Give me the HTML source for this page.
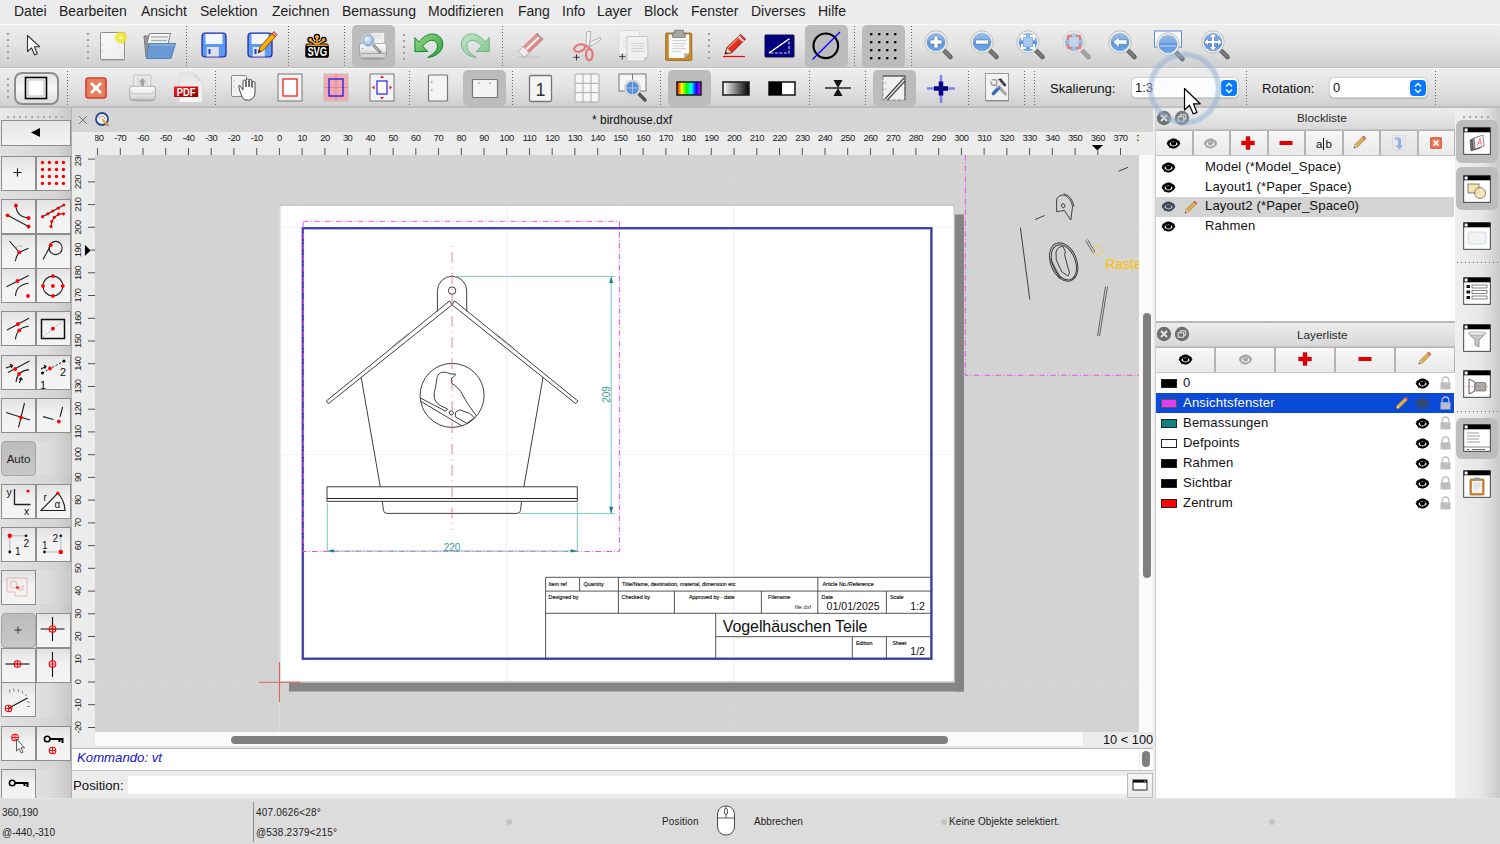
<!DOCTYPE html>
<html><head><meta charset="utf-8">
<style>
*{margin:0;padding:0;box-sizing:border-box}
html,body{width:1500px;height:844px;overflow:hidden;background:#ececec;font-family:"Liberation Sans",sans-serif;color:#222}
.a{position:absolute}
svg{overflow:visible}
#menu span{position:absolute;top:3px;font-size:14px;color:#1e1e1e;line-height:16px}
.grip{position:absolute;width:2px;background:repeating-linear-gradient(#9a9a9a 0 2px,transparent 2px 6px)}
.sep{position:absolute;width:1px;background:repeating-linear-gradient(#6a6a6a 0 1px,transparent 1px 3px)}
.pr{position:absolute;background:#bcbcbc;border-radius:5px}
.ic{position:absolute}
.lb{position:absolute;width:34px;height:35px;border:1px solid #9c9c9c;background:linear-gradient(#f4f4f4,#e2e2e2)}
.st{position:absolute;font-size:11px;color:#222;line-height:13px;white-space:nowrap}

</style></head><body>
<div class="a" style="left:0;top:0;width:1500px;height:24px;background:#ececec"></div>
<div class="a" style="left:0;top:24px;width:1500px;height:44px;background:linear-gradient(#ededed,#e4e4e4 45%,#cfcfcf);border-top:1px solid #f8f8f8;border-bottom:1px solid #c0c0c0"></div>
<div class="a" style="left:0;top:68px;width:1500px;height:40px;background:linear-gradient(#ededed,#e4e4e4 45%,#d0d0d0);border-top:1px solid #f6f6f6;border-bottom:2px solid #bdbdbd"></div>
<div class="a" style="left:0;top:108px;width:71px;height:690px;background:linear-gradient(90deg,#e8e8e8,#dcdcdc 70%,#c8c8c8)"></div>
<div class="a" style="left:71px;top:108px;width:1083px;height:690px;background:#ececec;border-left:1px solid #b0b0b0"></div>
<div class="a" style="left:72px;top:108px;width:1081px;height:24px;background:#d5d5d5"></div>
<div class="a" style="left:95px;top:155px;width:1044px;height:577px;background:#d3d3d3"></div>
<div class="a" style="left:1139px;top:155px;width:14px;height:591px;background:#fafafa"></div>
<div class="a" style="left:95px;top:732px;width:988px;height:14px;background:#fafafa"></div>
<div class="a" style="left:72px;top:746px;width:1081px;height:3px;background:#e6e6e6;border-bottom:1px solid #bdbdbd"></div>
<div class="a" style="left:72px;top:749px;width:1081px;height:22px;background:#fff;border-bottom:1px solid #c4c4c4"></div>
<div class="a" style="left:72px;top:771px;width:1081px;height:27px;background:#ececec"></div>
<div class="a" style="left:1153px;top:108px;width:302px;height:690px;background:#ececec"></div>
<div class="a" style="left:1455px;top:108px;width:45px;height:690px;background:linear-gradient(90deg,#efefef,#e6e6e6 60%,#c9c9c9)"></div>
<div class="a" style="left:0;top:798px;width:1500px;height:46px;background:#dcdcdc"></div>

<div id="menu">
<span style="left:14px">Datei</span>
<span style="left:59px">Bearbeiten</span>
<span style="left:141px">Ansicht</span>
<span style="left:200px">Selektion</span>
<span style="left:272px">Zeichnen</span>
<span style="left:342px">Bemassung</span>
<span style="left:428px">Modifizieren</span>
<span style="left:518px">Fang</span>
<span style="left:562px">Info</span>
<span style="left:597px">Layer</span>
<span style="left:644px">Block</span>
<span style="left:691px">Fenster</span>
<span style="left:751px">Diverses</span>
<span style="left:818px">Hilfe</span>
</div>

<div class="a" style="left:7px;top:33px;width:2px;height:2px;background:#a0a0a0"></div><div class="a" style="left:7px;top:39px;width:2px;height:2px;background:#a0a0a0"></div><div class="a" style="left:7px;top:45px;width:2px;height:2px;background:#a0a0a0"></div><div class="a" style="left:7px;top:51px;width:2px;height:2px;background:#a0a0a0"></div><div class="a" style="left:7px;top:57px;width:2px;height:2px;background:#a0a0a0"></div>
<svg class="a" style="left:26px;top:34px" width="15" height="23" viewBox="0 0 15 23"><path d="M1.5 1.5V17.5L5.5 13.8L8.6 21L11.4 19.8L8.4 12.8L13.6 12.6Z" fill="#fff" stroke="#333" stroke-width="1.1" stroke-linejoin="round"/></svg>
<div class="a" style="left:87px;top:33px;width:2px;height:2px;background:#a0a0a0"></div><div class="a" style="left:87px;top:39px;width:2px;height:2px;background:#a0a0a0"></div><div class="a" style="left:87px;top:45px;width:2px;height:2px;background:#a0a0a0"></div><div class="a" style="left:87px;top:51px;width:2px;height:2px;background:#a0a0a0"></div><div class="a" style="left:87px;top:57px;width:2px;height:2px;background:#a0a0a0"></div>
<svg class="a" style="left:99px;top:31px" width="28" height="31" viewBox="0 0 28 31"><defs><linearGradient id="nd" x1="0" y1="0" x2="1" y2="1"><stop offset="0" stop-color="#fafafa"/><stop offset="1" stop-color="#ececec"/></linearGradient><radialGradient id="gl"><stop offset="0" stop-color="#fff"/><stop offset="0.35" stop-color="#f4ec30"/><stop offset="0.7" stop-color="#eee030" stop-opacity="0.8"/><stop offset="1" stop-color="#eee030" stop-opacity="0"/></radialGradient></defs><rect x="1.5" y="1.5" width="24" height="27" rx="1" fill="url(#nd)" stroke="#8c8c8c" stroke-width="1"/><rect x="2" y="28.5" width="24" height="1.5" fill="#a0a0a0" opacity="0.6"/><circle cx="21.9" cy="6.5" r="7" fill="url(#gl)"/><path d="M3 13.5h1M3 20.5h1" stroke="#aaa"/></svg>
<svg class="a" style="left:141px;top:31px" width="36" height="29" viewBox="0 0 36 29"><path d="M3 5H10L9 26H5Z" fill="#9a9a9a" stroke="#666" stroke-width="0.8"/><path d="M8.5 2.5H29.5L27 13H6Z" fill="#f6f6f6" stroke="#777" stroke-width="0.9"/><path d="M10 6H27M10 9.5H26" stroke="#b0b0b0" stroke-width="1.6"/><path d="M8 12.5H34.5L30 27.5H5.5Z" fill="#6a9ad4" stroke="#4a7ab8" stroke-width="0.9"/><path d="M9 14H33" stroke="#9cc0ea" stroke-width="1"/></svg>
<div class="sep" style="left:186px;top:26px;height:41px"></div>
<svg class="a" style="left:201px;top:32px" width="27" height="27" viewBox="0 0 27 27"><rect x="1" y="1" width="24" height="24" rx="3" fill="#5a9af0" stroke="#2020a0" stroke-width="1.2"/><rect x="4.5" y="2" width="17" height="10" fill="#f4f6ff"/><rect x="5.8" y="15" width="12" height="9.5" fill="#e2e2ea"/><rect x="7.5" y="17" width="2" height="5" fill="#1040d0"/></svg>
<svg class="a" style="left:247px;top:30px" width="31" height="29" viewBox="0 0 31 29"><g transform="translate(0,2)"><rect x="1" y="1" width="24" height="24" rx="3" fill="#5a9af0" stroke="#2020a0" stroke-width="1.2"/><rect x="4.5" y="2" width="17" height="10" fill="#f4f6ff"/><rect x="5.8" y="15" width="12" height="9.5" fill="#e2e2ea"/><rect x="7.5" y="17" width="2" height="5" fill="#1040d0"/></g><path d="M11 23L13 17L25 3.5L28.5 6.5L16.5 20Z" fill="#f6b400" stroke="#a03010" stroke-width="0.9"/><path d="M25 3.5L26.8 1.6L30.2 4.6L28.5 6.5Z" fill="#f0a0a0" stroke="#a03010" stroke-width="0.8"/><path d="M11 23L12 19.5L14.5 21.5Z" fill="#333"/></svg>
<div class="sep" style="left:288px;top:26px;height:41px"></div>
<svg class="a" style="left:300px;top:24px" width="100" height="44" viewBox="300 24 100 44"><defs><linearGradient id="pb" x1="0" y1="0" x2="0" y2="1"><stop offset="0" stop-color="#fbfbfb"/><stop offset="0.6" stop-color="#e8e8e8"/><stop offset="1" stop-color="#c4c4c4"/></linearGradient><radialGradient id="pg" cx="0.4" cy="0.35"><stop offset="0" stop-color="#eef4fc"/><stop offset="1" stop-color="#a8c4e8"/></radialGradient></defs><g stroke="#000" stroke-width="3" stroke-linecap="round"><path d="M317 45L317 37M317 45L310.5 40M317 45L323.5 40M317 45L307 45M317 45L327 45"/></g><g fill="#f7a830" stroke="#000" stroke-width="1.3"><circle cx="317" cy="37" r="2.6"/><circle cx="310.3" cy="39.8" r="2.4"/><circle cx="323.7" cy="39.8" r="2.4"/></g><g stroke="#f7a830" stroke-width="1.6" stroke-linecap="round"><path d="M317 45L317 37.5M317 45L310.8 40.3M317 45L323.2 40.3"/></g><rect x="305.3" y="44.4" width="23.6" height="13.4" rx="2.6" fill="#000"/><path d="M306.5 45.2H327.8" stroke="#f7a830" stroke-width="1.4"/><text transform="translate(317.2,56.3) scale(0.78,1)" font-size="12.2" font-weight="bold" fill="#fff" text-anchor="middle" font-family="Liberation Sans" letter-spacing="-0.3">SVG</text></svg>
<div class="sep" style="left:344px;top:26px;height:41px"></div>
<div class="pr" style="left:352px;top:25px;width:43px;height:43px"></div>
<svg class="a" style="left:350px;top:24px" width="50" height="44" viewBox="350 24 50 44"><rect x="371" y="32.6" width="13.5" height="12" fill="#f2f2f2" stroke="#bdbdbd" stroke-width="0.8"/><path d="M373 35.5H382M373 38H382" stroke="#d0d0d0" stroke-width="0.7"/><path d="M359.5 45.5Q359.5 43.5 361.5 43.5H384.5Q386.5 43.5 386.5 45.5V54.5H359.5Z" fill="url(#pb)" stroke="#9a9a9a" stroke-width="0.8"/><rect x="360" y="53.5" width="26" height="4.5" rx="1.5" fill="#d6d6d6" stroke="#9a9a9a" stroke-width="0.7"/><ellipse cx="373" cy="58.6" rx="12" ry="1.2" fill="#888" opacity="0.5"/><path d="M362 48.5h1.2" stroke="#777" stroke-width="0.9"/><path d="M372.8 44.5L380 52" stroke="#8c8c8c" stroke-width="3" stroke-linecap="round"/><path d="M373.6 45.6L379.3 51.3" stroke="#d8d8d8" stroke-width="0.8"/><circle cx="368.2" cy="40.4" r="6.4" fill="#f4f4f4" stroke="#c8c8c8" stroke-width="0.6"/><circle cx="368.2" cy="40.4" r="5.2" fill="url(#pg)" stroke="#5a8ad0" stroke-width="0.9"/></svg>
<div class="a" style="left:403px;top:34px;width:2px;height:2px;background:#a0a0a0"></div><div class="a" style="left:403px;top:40px;width:2px;height:2px;background:#a0a0a0"></div><div class="a" style="left:403px;top:46px;width:2px;height:2px;background:#a0a0a0"></div><div class="a" style="left:403px;top:52px;width:2px;height:2px;background:#a0a0a0"></div><div class="a" style="left:403px;top:58px;width:2px;height:2px;background:#a0a0a0"></div>
<svg class="a" style="left:408px;top:28px" width="90" height="36" viewBox="408 28 90 36"><defs><linearGradient id="ug" x1="0" y1="0" x2="1" y2="1"><stop offset="0" stop-color="#98d880"/><stop offset="1" stop-color="#2aa040"/></linearGradient><linearGradient id="rg" x1="1" y1="0" x2="0" y2="1"><stop offset="0" stop-color="#c4e8c0"/><stop offset="1" stop-color="#80c490"/></linearGradient></defs><path d="M414.9 37.6L418.8 42.1C422 38 427 34 432 34C438 34 442.8 38 442.8 44.2C442.8 51 436 57 427.8 57.4C433 54 437.4 51 437.4 46C437.4 42.5 435 40.3 432 40.3C429 40.3 425 43 422.7 46.3L427.8 51.4L414.9 51.7Z" fill="url(#ug)" stroke="#0a7a2a" stroke-width="0.9" stroke-linejoin="round"/><g transform="translate(904.2,0) scale(-1,1)"><path d="M414.9 37.6L418.8 42.1C422 38 427 34 432 34C438 34 442.8 38 442.8 44.2C442.8 51 436 57 427.8 57.4C433 54 437.4 51 437.4 46C437.4 42.5 435 40.3 432 40.3C429 40.3 425 43 422.7 46.3L427.8 51.4L414.9 51.7Z" fill="url(#rg)" stroke="#68b07c" stroke-width="0.9" stroke-linejoin="round"/></g></svg>
<div class="sep" style="left:502px;top:26px;height:41px"></div>
<svg class="a" style="left:508px;top:26px" width="200" height="40" viewBox="508 26 200 40"><defs><linearGradient id="eg" x1="0" y1="0" x2="1" y2="1"><stop offset="0" stop-color="#f0b0b0"/><stop offset="1" stop-color="#d86868"/></linearGradient></defs><ellipse cx="529" cy="56.8" rx="12" ry="1.6" fill="#c8c8c8" opacity="0.8"/><path d="M518.3 51.3L537.3 33L543.3 39L524.3 57.3Z" fill="url(#eg)" stroke="#c07070" stroke-width="0.6"/><path d="M521.3 54.3L540.3 36" stroke="#f2f2f2" stroke-width="2.2"/><path d="M536.6 33.7L542.6 39.7" stroke="#999" stroke-width="1.6"/><path d="M518.3 51.3L523 46.7L529 52.7L524.3 57.3Z" fill="#eeeeee" stroke="#aaa" stroke-width="0.6"/><path d="M586.7 32L590.7 31.3L589.4 46.7L586 44.7Z" fill="#f4f4f4" stroke="#9a9a9a" stroke-width="0.7"/><path d="M590 42L600.7 37.3L600.7 40L589.7 46.7Z" fill="#f4f4f4" stroke="#9a9a9a" stroke-width="0.7"/><ellipse cx="579.6" cy="48" rx="5.6" ry="3.4" transform="rotate(-18 579.6 48)" fill="none" stroke="#e07a7a" stroke-width="2.3"/><ellipse cx="589.3" cy="54.6" rx="3.3" ry="5.6" fill="none" stroke="#e07a7a" stroke-width="2.3"/><path d="M584 47.5L588 45.5M588.5 46.5L589 49" stroke="#e07a7a" stroke-width="2"/><path d="M573.5 57.3H579.5M576.5 54.3V60.3" stroke="#333" stroke-width="1"/><path d="M619 30.5H638Q639.4 30.5 639.4 32V54.2H619Z" fill="#f2f2f2" stroke="#d4d4d4" stroke-width="0.8"/><path d="M622 38H626M622 41H626M622 43.8H626M622 46.6H626" stroke="#dadada" stroke-width="0.8"/><path d="M627 36.5H646.4Q647.8 36.5 647.8 38V57.5L644.3 61.1H627Z" fill="#f0f0f0" stroke="#bdbdbd" stroke-width="0.8"/><path d="M644.3 61.1V57.5H647.8Z" fill="#d0d0d0" stroke="#bbb" stroke-width="0.5"/><path d="M631 43.4H644.7M631 45.9H644M631 48.5H643M631 51.2H644.7" stroke="#c8c8c8" stroke-width="0.8"/><path d="M619.3 56.6H625.3M622.3 53.6V59.6" stroke="#444" stroke-width="1"/><rect x="665.6" y="33" width="26.2" height="27.5" rx="1.2" fill="#c8882a" stroke="#8a5a18" stroke-width="0.7"/><path d="M668.8 34.4H689.2V53.3L684 58.1H668.8Z" fill="#fafafa"/><path d="M684 58.1L689.2 53.3H684Z" fill="#b8b8b8"/><path d="M672.4 40.5H685.9M672.4 43.4H685.9M672.4 46H684.5M672.4 48.6H685.9M672.4 51.4H681" stroke="#c4c4c4" stroke-width="0.8"/><path d="M672.4 37.4V33.2H674.3V30.2H683.5V33.2H685.3V37.4Z" fill="#a8a8a0" stroke="#6a6a66" stroke-width="0.7"/></svg>
<div class="a" style="left:708px;top:33px;width:2px;height:2px;background:#a0a0a0"></div><div class="a" style="left:708px;top:39px;width:2px;height:2px;background:#a0a0a0"></div><div class="a" style="left:708px;top:45px;width:2px;height:2px;background:#a0a0a0"></div><div class="a" style="left:708px;top:51px;width:2px;height:2px;background:#a0a0a0"></div><div class="a" style="left:708px;top:57px;width:2px;height:2px;background:#a0a0a0"></div>
<svg class="a" style="left:721px;top:33px" width="26" height="26" viewBox="0 0 26 26"><path d="M4 21L6 14.5L19.5 1.5L24.5 6L11 19.5Z" fill="#e03020" stroke="#801010" stroke-width="0.9"/><path d="M7 15L20 2.5" stroke="#f89070" stroke-width="1.2"/><path d="M17.5 3.5L22.5 8.2" stroke="#d8d8d8" stroke-width="2.2"/><path d="M4 21L6 14.5L11 19.5Z" fill="#f0d8b0" stroke="#801010" stroke-width="0.6"/><path d="M4 21L4.8 18.3L6.8 20.3Z" fill="#222"/><path d="M2 23.5H24" stroke="#f00" stroke-width="1.2"/></svg>
<svg class="a" style="left:764px;top:34px" width="32" height="25" viewBox="0 0 32 25"><rect x="1" y="1" width="29" height="22" rx="0.5" fill="#000080" stroke="#101040" stroke-width="1"/><path d="M5 19L25 5V19Z" fill="none" stroke="#d8d8f0" stroke-width="1.1" stroke-dasharray="3 1.5"/><path d="M5 19L25 5" stroke="#fff" stroke-width="1.2"/></svg>
<div class="pr" style="left:805px;top:25px;width:43px;height:43px"></div>
<svg class="a" style="left:810px;top:29px" width="32" height="32" viewBox="0 0 32 32"><circle cx="15.8" cy="16.8" r="12.3" fill="none" stroke="#000" stroke-width="2.1"/><path d="M2.5 30.5L30 3" stroke="#0000ff" stroke-width="1.2"/></svg>
<div class="sep" style="left:854px;top:26px;height:41px"></div>
<div class="pr" style="left:862px;top:25px;width:43px;height:43px"></div>
<svg class="a" style="left:862px;top:25px" width="43" height="43" viewBox="862 25 43 43"><rect x="870" y="33" width="2.4" height="2.4" fill="#111"/><rect x="870" y="41" width="2.4" height="2.4" fill="#111"/><rect x="870" y="49" width="2.4" height="2.4" fill="#111"/><rect x="870" y="57" width="2.4" height="2.4" fill="#111"/><rect x="878" y="33" width="2.4" height="2.4" fill="#111"/><rect x="878" y="41" width="2.4" height="2.4" fill="#111"/><rect x="878" y="49" width="2.4" height="2.4" fill="#111"/><rect x="878" y="57" width="2.4" height="2.4" fill="#111"/><rect x="886" y="33" width="2.4" height="2.4" fill="#111"/><rect x="886" y="41" width="2.4" height="2.4" fill="#111"/><rect x="886" y="49" width="2.4" height="2.4" fill="#111"/><rect x="886" y="57" width="2.4" height="2.4" fill="#111"/><rect x="894" y="33" width="2.4" height="2.4" fill="#111"/><rect x="894" y="41" width="2.4" height="2.4" fill="#111"/><rect x="894" y="49" width="2.4" height="2.4" fill="#111"/><rect x="894" y="57" width="2.4" height="2.4" fill="#111"/></svg>
<div class="sep" style="left:911px;top:26px;height:41px"></div>
<svg class="a" style="left:900px;top:24px" width="340" height="44" viewBox="900 24 340 44"><defs><linearGradient id="lg" x1="0" y1="0" x2="0" y2="1"><stop offset="0" stop-color="#9cc0ea"/><stop offset="0.45" stop-color="#7aa8e0"/><stop offset="0.5" stop-color="#5e92d6"/><stop offset="1" stop-color="#72aaea"/></linearGradient></defs><path d="M944 50.5L950.5 57" stroke="#6a6a6a" stroke-width="4.6" stroke-linecap="round"/><path d="M945 51.5L950 56.5" stroke="#9a9a9a" stroke-width="1" stroke-linecap="round"/><circle cx="936" cy="42" r="11.2" fill="#f2f2ec" stroke="#b8b8b0" stroke-width="0.9"/><circle cx="936" cy="42" r="9.3" fill="url(#lg)"/><path d="M934 36H938V40H942V44H938V48H934V44H930V40H934Z" fill="#fff" stroke="#3a6ab0" stroke-width="0.5"/><path d="M990 50.5L996.5 57" stroke="#6a6a6a" stroke-width="4.6" stroke-linecap="round"/><path d="M991 51.5L996 56.5" stroke="#9a9a9a" stroke-width="1" stroke-linecap="round"/><circle cx="982" cy="42" r="11.2" fill="#f2f2ec" stroke="#b8b8b0" stroke-width="0.9"/><circle cx="982" cy="42" r="9.3" fill="url(#lg)"/><rect x="975.5" y="40" width="13" height="4" fill="#fff" stroke="#3a6ab0" stroke-width="0.5"/><path d="M1036 50.5L1042.5 57" stroke="#6a6a6a" stroke-width="4.6" stroke-linecap="round"/><path d="M1037 51.5L1042 56.5" stroke="#9a9a9a" stroke-width="1" stroke-linecap="round"/><circle cx="1028" cy="42" r="11.2" fill="#f2f2ec" stroke="#b8b8b0" stroke-width="0.9"/><circle cx="1028" cy="42" r="9.3" fill="url(#lg)"/><rect x="1023.5" y="37.5" width="9" height="9" fill="#a8c8ee"/><path d="M1022 40V36H1026M1030 36H1034V40M1034 44V48H1030M1026 48H1022V44" fill="none" stroke="#fff" stroke-width="2"/><g opacity="0.55"><path d="M1082 50.5L1088.5 57" stroke="#6a6a6a" stroke-width="4.6" stroke-linecap="round"/><path d="M1083 51.5L1088 56.5" stroke="#9a9a9a" stroke-width="1" stroke-linecap="round"/><circle cx="1074" cy="42" r="11.2" fill="#f2f2ec" stroke="#b8b8b0" stroke-width="0.9"/><circle cx="1074" cy="42" r="9.3" fill="url(#lg)"/><rect x="1069.5" y="37.5" width="9" height="9" fill="#a8c8ee"/><path d="M1068 40V36H1072M1076 36H1080V40M1080 44V48H1076M1072 48H1068V44" fill="none" stroke="#f02020" stroke-width="2"/></g><path d="M1128 50.5L1134.5 57" stroke="#6a6a6a" stroke-width="4.6" stroke-linecap="round"/><path d="M1129 51.5L1134 56.5" stroke="#9a9a9a" stroke-width="1" stroke-linecap="round"/><circle cx="1120" cy="42" r="11.2" fill="#f2f2ec" stroke="#b8b8b0" stroke-width="0.9"/><circle cx="1120" cy="42" r="9.3" fill="url(#lg)"/><path d="M1113 42L1119 36.5V39.8H1127V44.2H1119V47.5Z" fill="#fff" stroke="#3a6ab0" stroke-width="0.5"/><rect x="1154.5" y="31" width="27" height="16" fill="#fff" stroke="#5a8ad0" stroke-width="1"/><path d="M1176 52.5L1182.5 59" stroke="#6a6a6a" stroke-width="4.6" stroke-linecap="round"/><path d="M1177 53.5L1182 58.5" stroke="#9a9a9a" stroke-width="1" stroke-linecap="round"/><circle cx="1168" cy="44" r="11.2" fill="#f2f2ec" stroke="#b8b8b0" stroke-width="0.9"/><circle cx="1168" cy="44" r="9.3" fill="url(#lg)"/><path d="M1160 46H1176" stroke="#a8c8f0" stroke-width="1.5"/><path d="M1221 50.5L1227.5 57" stroke="#6a6a6a" stroke-width="4.6" stroke-linecap="round"/><path d="M1222 51.5L1227 56.5" stroke="#9a9a9a" stroke-width="1" stroke-linecap="round"/><circle cx="1213" cy="42" r="11.2" fill="#f2f2ec" stroke="#b8b8b0" stroke-width="0.9"/><circle cx="1213" cy="42" r="9.3" fill="url(#lg)"/><path d="M1213 33L1217 37H1214.5V40.5H1218V38L1222 42L1218 46V43.5H1214.5V47H1217L1213 51L1209 47H1211.5V43.5H1208V46L1204 42L1208 38V40.5H1211.5V37H1209Z" fill="#fff" stroke="#3a6ab0" stroke-width="0.6"/></svg>
<div class="a" style="left:7px;top:78px;width:2px;height:2px;background:#a0a0a0"></div><div class="a" style="left:7px;top:84px;width:2px;height:2px;background:#a0a0a0"></div><div class="a" style="left:7px;top:90px;width:2px;height:2px;background:#a0a0a0"></div><div class="a" style="left:7px;top:96px;width:2px;height:2px;background:#a0a0a0"></div>
<div class="a" style="left:14px;top:72px;width:45px;height:33px;border:2.5px solid #8e8e8e;border-radius:8px;background:linear-gradient(#e4e4e4,#f6f6f6 50%,#dcdcdc)"></div>
<svg class="a" style="left:24px;top:76px" width="24" height="24" viewBox="0 0 24 24"><rect x="1.5" y="1.5" width="21" height="21" fill="#fff" stroke="#000" stroke-width="1.6"/><rect x="4" y="4" width="16" height="16" fill="#fff" stroke="#b8b8b8" stroke-width="1"/></svg>
<div class="sep" style="left:67px;top:71px;height:34px"></div>
<svg class="a" style="left:85px;top:77px" width="22" height="22" viewBox="0 0 22 22"><rect x="1" y="1" width="20" height="20" rx="2.5" fill="#e08060" stroke="#d83a2a" stroke-width="1.6"/><path d="M6 6L16 16M16 6L6 16" stroke="#fff" stroke-width="2.8"/></svg>
<svg class="a" style="left:124px;top:70px" width="86" height="36" viewBox="124 70 86 36"><defs><linearGradient id="prb" x1="0" y1="0" x2="0" y2="1"><stop offset="0" stop-color="#fbfbfb"/><stop offset="0.55" stop-color="#ececec"/><stop offset="1" stop-color="#c8c8c8"/></linearGradient><linearGradient id="pdfr" x1="0" y1="0" x2="1" y2="1"><stop offset="0" stop-color="#ff1a1a"/><stop offset="1" stop-color="#8a0000"/></linearGradient><linearGradient id="pdfp" x1="0" y1="0" x2="0" y2="1"><stop offset="0" stop-color="#e4e4e4"/><stop offset="1" stop-color="#fafafa"/></linearGradient></defs><rect x="133.8" y="75.2" width="17" height="12" rx="1" fill="#f0f0f0" stroke="#b4b4b4" stroke-width="0.8"/><rect x="135.6" y="77" width="13.4" height="8" fill="#e2e2e2"/><path d="M142.4 78.3L146.2 82.2H144V86H140.8V82.2H138.6Z" fill="#a4a4a4"/><path d="M129.8 88.5Q129.8 86.2 132 86.2H153Q155.3 86.2 155.3 88.5V97.5Q155.3 100 153 100H132Q129.8 100 129.8 97.5Z" fill="url(#prb)" stroke="#9c9c9c" stroke-width="0.8"/><path d="M131.8 91V93.2Q131.8 93.8 132.6 93.8H152.4Q153.2 93.8 153.2 93.2V91" fill="none" stroke="#aaa" stroke-width="0.7"/><ellipse cx="142.5" cy="100.6" rx="12" ry="1" fill="#999" opacity="0.5"/><path d="M179.5 73H193.5L202 81.5V102H179.5Z" fill="url(#pdfp)" stroke="#d8d8d8" stroke-width="0.6"/><path d="M193.5 73L202 81.5L197 80Z" fill="#d0d0d0"/><circle cx="197" cy="78.5" r="0.8" fill="#fff"/><rect x="174" y="86.5" width="24.2" height="10.5" fill="url(#pdfr)"/><text transform="translate(186.2,95.9) scale(0.85,1)" font-size="11" font-weight="bold" fill="#fff" text-anchor="middle" font-family="Liberation Sans">PDF</text></svg>
<div class="sep" style="left:215px;top:71px;height:34px"></div>
<svg class="a" style="left:230px;top:74px" width="28" height="28" viewBox="0 0 28 28"><rect x="1.5" y="1.5" width="15" height="21" rx="1" fill="#f2f2f2" stroke="#8a8a8a" stroke-width="1"/><path d="M3.5 7h1M3.5 13h1" stroke="#999"/><path d="M9 14Q8 11 10 11.5L13 16V7.5Q13 6 14.5 6T16 7.5V13V6.5Q16 5 17.5 5T19 6.5V13V7Q19 5.5 20.5 5.5T22 7V13.5V9Q22 7.5 23.5 7.5T25 9V18Q25 24 20 26H15Q12 25 9 14Z" fill="#fff" stroke="#333" stroke-width="0.9"/></svg>
<svg class="a" style="left:277px;top:73px" width="26" height="29" viewBox="0 0 26 29"><rect x="1" y="1" width="24" height="27" fill="#f2f2f2" stroke="#777" stroke-width="1"/><rect x="6" y="6" width="14" height="17" fill="#fff" stroke="#f02020" stroke-width="1.3"/></svg>
<svg class="a" style="left:323px;top:73px" width="26" height="29" viewBox="0 0 26 29"><rect x="1" y="1" width="24" height="27" fill="#f2a8b0" stroke="#c0c0c0" stroke-width="1"/><path d="M13 1V28M1 14.5H25" stroke="#e08890" stroke-width="1"/><rect x="6" y="6" width="14" height="17" fill="none" stroke="#1818e8" stroke-width="1.3"/></svg>
<svg class="a" style="left:369px;top:73px" width="26" height="29" viewBox="0 0 26 29"><rect x="1" y="1" width="24" height="27" fill="#f4f4f4" stroke="#777" stroke-width="1"/><rect x="8" y="8" width="10" height="13" fill="#fff" stroke="#4040f0" stroke-width="1.4"/><path d="M13 2.5L11 5H15ZM13 26.5L11 24H15ZM3 14.5L5.5 12.5V16.5ZM23 14.5L20.5 12.5V16.5Z" fill="#f01010"/></svg>
<div class="sep" style="left:409px;top:71px;height:34px"></div>
<svg class="a" style="left:427px;top:74px" width="22" height="28" viewBox="0 0 22 28"><rect x="1.5" y="1" width="19" height="26" rx="1" fill="#f4f4f4" stroke="#777" stroke-width="1.2"/><path d="M4 8h1.5M4 16h1.5" stroke="#777" stroke-width="1"/></svg>
<div class="pr" style="left:463px;top:70px;width:43px;height:36px"></div>
<svg class="a" style="left:471px;top:78px" width="28" height="21" viewBox="0 0 28 21"><rect x="1.5" y="1.5" width="25" height="18" rx="1" fill="#f4f4f4" stroke="#777" stroke-width="1.2"/><path d="M8 4.5v1.5M19 4.5v1.5" stroke="#777" stroke-width="1"/></svg>
<div class="sep" style="left:512px;top:71px;height:34px"></div>
<svg class="a" style="left:528px;top:74px" width="25" height="29" viewBox="0 0 25 29"><rect x="1.5" y="1.5" width="22" height="26" rx="1.5" fill="#f4f4f4" stroke="#777" stroke-width="1.3"/><text x="12.5" y="22" font-size="18" fill="#333" text-anchor="middle" font-family="Liberation Sans">1</text></svg>
<svg class="a" style="left:574px;top:73px" width="26" height="30" viewBox="0 0 26 30"><rect x="1" y="1" width="24" height="28" rx="1" fill="#f6f6f6" stroke="#a8a8a8" stroke-width="1"/><path d="M9 1V29M17 1V29M1 10.3H25M1 19.6H25" stroke="#a8a8a8" stroke-width="1"/></svg>
<svg class="a" style="left:618px;top:73px" width="32" height="32" viewBox="0 0 32 32"><rect x="1" y="1" width="27" height="17" fill="#f6f6f6" stroke="#777" stroke-width="1"/><path d="M14.5 1V18" stroke="#777"/><path d="M20 20L27 27" stroke="#555" stroke-width="3.6" stroke-linecap="round"/><circle cx="14.5" cy="15" r="8" fill="#e8e8e8" stroke="#c8c8c8"/><circle cx="14.5" cy="15" r="6.5" fill="#5a92d8"/><path d="M8 15H21M14.5 8.5V21.5" stroke="#b8d4f4" stroke-width="0.8"/></svg>
<div class="sep" style="left:660px;top:71px;height:34px"></div>
<div class="pr" style="left:668px;top:70px;width:43px;height:36px"></div>
<svg class="a" style="left:676px;top:81px" width="26" height="15" viewBox="0 0 26 15"><defs><linearGradient id="rb"><stop offset="0" stop-color="#ff0000"/><stop offset="0.2" stop-color="#ffff00"/><stop offset="0.4" stop-color="#00ff00"/><stop offset="0.6" stop-color="#00ffff"/><stop offset="0.8" stop-color="#0000ff"/><stop offset="1" stop-color="#ff00ff"/></linearGradient></defs><rect x="1" y="1" width="24" height="13" fill="url(#rb)" stroke="#222" stroke-width="1.6"/></svg>
<svg class="a" style="left:722px;top:81px" width="28" height="15" viewBox="0 0 28 15"><defs><linearGradient id="gr"><stop offset="0" stop-color="#fff"/><stop offset="1" stop-color="#000"/></linearGradient></defs><rect x="1" y="1" width="26" height="13" fill="url(#gr)" stroke="#222" stroke-width="1.6"/></svg>
<svg class="a" style="left:768px;top:81px" width="28" height="15" viewBox="0 0 28 15"><rect x="1" y="1" width="26" height="13" fill="#fff" stroke="#222" stroke-width="1.6"/><rect x="1" y="1" width="13" height="13" fill="#000"/></svg>
<div class="sep" style="left:809px;top:71px;height:34px"></div>
<svg class="a" style="left:824px;top:79px" width="28" height="18" viewBox="0 0 28 18"><path d="M1 9H27" stroke="#333" stroke-width="1.6"/><path d="M9.5 1H18.5L14 9ZM9.5 17H18.5L14 9Z" fill="#111"/></svg>
<div class="sep" style="left:865px;top:71px;height:34px"></div>
<div class="pr" style="left:873px;top:70px;width:43px;height:36px"></div>
<svg class="a" style="left:882px;top:75px" width="25" height="26" viewBox="0 0 25 26"><rect x="1" y="1" width="22" height="24" fill="#f0f0f0" stroke="#888" stroke-width="1" stroke-dasharray="4 1.5"/><path d="M1 1H23V25" fill="none" stroke="#666" stroke-width="1.3"/><path d="M3 24L22 3M5.5 25L23 6" stroke="#444" stroke-width="1.2"/><path d="M3.5 8h1M3.5 14h1" stroke="#777"/></svg>
<svg class="a" style="left:926px;top:74px" width="30" height="30" viewBox="0 0 30 30"><path d="M1 14.5H29M15 1V29" stroke="#8080f0" stroke-width="2.5"/><path d="M8 14.5H22M15 7.5V21.5" stroke="#000088" stroke-width="4.5"/></svg>
<div class="sep" style="left:968px;top:71px;height:34px"></div>
<svg class="a" style="left:980px;top:70px" width="36" height="36" viewBox="980 70 36 36"><rect x="985.5" y="73.5" width="23" height="27" fill="#f2f2f2" stroke="#9a9a9a" stroke-width="1"/><rect x="986" y="100" width="23" height="1.6" fill="#888" opacity="0.7"/><path d="M999.8 87.8L1005.5 94" stroke="#a8a8a8" stroke-width="3.2" stroke-linecap="round"/><path d="M999.5 81L1001.5 79.2L1006.5 85L1004.5 86.8Z" fill="#303838"/><path d="M998.5 80.3Q1000 78.6 1001.8 79.6" stroke="#303838" stroke-width="1.6" fill="none"/><path d="M997 88L1002 83" stroke="#c8c8c8" stroke-width="1.4"/><path d="M993.3 93.6L998.6 88" stroke="#3a6ab8" stroke-width="3.4" stroke-linecap="round"/><path d="M998.4 88.2L996 85.5" stroke="#b0b0b0" stroke-width="1.8"/><circle cx="994" cy="82.4" r="2.9" fill="none" stroke="#a0a0a0" stroke-width="1.5"/><path d="M991 80L994 83" stroke="#f2f2f2" stroke-width="1.6"/></svg>
<div class="sep" style="left:1024px;top:71px;height:34px"></div>
<div class="sep" style="left:1034px;top:71px;height:34px"></div>
<div class="a" style="left:1050px;top:81px;font-size:13.1px;line-height:16px;color:#111;white-space:nowrap">Skalierung:</div>
<div class="a" style="left:1131px;top:77px;width:108px;height:21px;background:#fff;border:1px solid #d2d2d2;border-radius:5px;box-shadow:0 0.5px 1px rgba(0,0,0,0.15)"></div>
<div class="a" style="left:1135px;top:80px;font-size:13px;line-height:16px;color:#111">1:3</div>
<div class="a" style="left:1221px;top:80px;width:16px;height:16px;background:#0a7bff;border-radius:4px"></div>
<svg class="a" style="left:1224px;top:81px" width="10" height="14" viewBox="0 0 10 14"><path d="M2 5.5L5 2.5L8 5.5M2 8.5L5 11.5L8 8.5" stroke="#fff" stroke-width="1.3" fill="none"/></svg>
<div class="sep" style="left:1246px;top:71px;height:34px"></div>
<div class="a" style="left:1262px;top:81px;font-size:13.1px;line-height:16px;color:#111;white-space:nowrap">Rotation:</div>
<div class="a" style="left:1329px;top:77px;width:99px;height:21px;background:#fff;border:1px solid #d2d2d2;border-radius:5px;box-shadow:0 0.5px 1px rgba(0,0,0,0.15)"></div>
<div class="a" style="left:1333px;top:80px;font-size:13px;line-height:16px;color:#111">0</div>
<div class="a" style="left:1410px;top:80px;width:16px;height:16px;background:#0a7bff;border-radius:4px"></div>
<svg class="a" style="left:1413px;top:81px" width="10" height="14" viewBox="0 0 10 14"><path d="M2 5.5L5 2.5L8 5.5M2 8.5L5 11.5L8 8.5" stroke="#fff" stroke-width="1.3" fill="none"/></svg>
<div class="sep" style="left:1435px;top:71px;height:34px"></div>
<div class="a" style="left:7px;top:116px;width:2px;height:2px;background:#a8a8a8"></div><div class="a" style="left:13px;top:116px;width:2px;height:2px;background:#a8a8a8"></div><div class="a" style="left:19px;top:116px;width:2px;height:2px;background:#a8a8a8"></div><div class="a" style="left:25px;top:116px;width:2px;height:2px;background:#a8a8a8"></div><div class="a" style="left:31px;top:116px;width:2px;height:2px;background:#a8a8a8"></div><div class="a" style="left:37px;top:116px;width:2px;height:2px;background:#a8a8a8"></div><div class="a" style="left:43px;top:116px;width:2px;height:2px;background:#a8a8a8"></div><div class="a" style="left:49px;top:116px;width:2px;height:2px;background:#a8a8a8"></div><div class="a" style="left:55px;top:116px;width:2px;height:2px;background:#a8a8a8"></div><div class="a" style="left:61px;top:116px;width:2px;height:2px;background:#a8a8a8"></div>
<div class="a" style="left:1px;top:120px;width:70px;height:26px;border:1px solid #8e8e8e;background:linear-gradient(#e6e6e6,#f4f4f4)"></div>
<svg class="a" style="left:30px;top:127px" width="11" height="11" viewBox="0 0 11 11"><path d="M1 5.5L10 1V10Z" fill="#000"/></svg>
<div class="a" style="left:0;top:146px;width:71px;height:10px;background:linear-gradient(90deg,#e2e2e2,#d4d4d4 80%,#c4c4c4)"></div>
<div class="a" style="left:0;top:190px;width:71px;height:9px;background:linear-gradient(90deg,#e2e2e2,#d4d4d4 80%,#c4c4c4)"></div>
<div class="a" style="left:0;top:303px;width:71px;height:8px;background:linear-gradient(90deg,#e2e2e2,#d4d4d4 80%,#c4c4c4)"></div>
<div class="a" style="left:0;top:389px;width:71px;height:9px;background:linear-gradient(90deg,#e2e2e2,#d4d4d4 80%,#c4c4c4)"></div>
<div class="a" style="left:0;top:432px;width:71px;height:9px;background:linear-gradient(90deg,#e2e2e2,#d4d4d4 80%,#c4c4c4)"></div>
<div class="a" style="left:0;top:475px;width:71px;height:9px;background:linear-gradient(90deg,#e2e2e2,#d4d4d4 80%,#c4c4c4)"></div>
<div class="a" style="left:0;top:518px;width:71px;height:9px;background:linear-gradient(90deg,#e2e2e2,#d4d4d4 80%,#c4c4c4)"></div>
<div class="a" style="left:0;top:561px;width:71px;height:9px;background:linear-gradient(90deg,#e2e2e2,#d4d4d4 80%,#c4c4c4)"></div>
<div class="a" style="left:0;top:604px;width:71px;height:9px;background:linear-gradient(90deg,#e2e2e2,#d4d4d4 80%,#c4c4c4)"></div>
<div class="a" style="left:0;top:717px;width:71px;height:9px;background:linear-gradient(90deg,#e2e2e2,#d4d4d4 80%,#c4c4c4)"></div>
<div class="a" style="left:0;top:760px;width:71px;height:9px;background:linear-gradient(90deg,#e2e2e2,#d4d4d4 80%,#c4c4c4)"></div>
<div class="a" style="left:1px;top:441px;width:35px;height:35px;border:1px solid #a4a4a4;border-radius:4px;background:linear-gradient(#bcbcbc,#c8c8c8)"></div>
<div class="a" style="left:1px;top:156px;width:35px;height:35px;border:1px solid #8e8e8e;background:linear-gradient(#e2e2e2,#f2f2f2 45%,#f4f4f4)"></div>
<div class="a" style="left:36px;top:156px;width:35px;height:35px;border:1px solid #8e8e8e;background:linear-gradient(#e2e2e2,#f2f2f2 45%,#f4f4f4)"></div>
<div class="a" style="left:1px;top:199px;width:35px;height:35px;border:1px solid #8e8e8e;background:linear-gradient(#e2e2e2,#f2f2f2 45%,#f4f4f4)"></div>
<div class="a" style="left:36px;top:199px;width:35px;height:35px;border:1px solid #8e8e8e;background:linear-gradient(#e2e2e2,#f2f2f2 45%,#f4f4f4)"></div>
<div class="a" style="left:1px;top:234px;width:35px;height:35px;border:1px solid #8e8e8e;background:linear-gradient(#e2e2e2,#f2f2f2 45%,#f4f4f4)"></div>
<div class="a" style="left:36px;top:234px;width:35px;height:35px;border:1px solid #8e8e8e;background:linear-gradient(#e2e2e2,#f2f2f2 45%,#f4f4f4)"></div>
<div class="a" style="left:1px;top:268px;width:35px;height:35px;border:1px solid #8e8e8e;background:linear-gradient(#e2e2e2,#f2f2f2 45%,#f4f4f4)"></div>
<div class="a" style="left:36px;top:268px;width:35px;height:35px;border:1px solid #8e8e8e;background:linear-gradient(#e2e2e2,#f2f2f2 45%,#f4f4f4)"></div>
<div class="a" style="left:1px;top:311px;width:35px;height:35px;border:1px solid #8e8e8e;background:linear-gradient(#e2e2e2,#f2f2f2 45%,#f4f4f4)"></div>
<div class="a" style="left:36px;top:311px;width:35px;height:35px;border:1px solid #8e8e8e;background:linear-gradient(#e2e2e2,#f2f2f2 45%,#f4f4f4)"></div>
<div class="a" style="left:1px;top:355px;width:35px;height:35px;border:1px solid #8e8e8e;background:linear-gradient(#e2e2e2,#f2f2f2 45%,#f4f4f4)"></div>
<div class="a" style="left:36px;top:355px;width:35px;height:35px;border:1px solid #8e8e8e;background:linear-gradient(#e2e2e2,#f2f2f2 45%,#f4f4f4)"></div>
<div class="a" style="left:1px;top:398px;width:35px;height:35px;border:1px solid #8e8e8e;background:linear-gradient(#e2e2e2,#f2f2f2 45%,#f4f4f4)"></div>
<div class="a" style="left:36px;top:398px;width:35px;height:35px;border:1px solid #8e8e8e;background:linear-gradient(#e2e2e2,#f2f2f2 45%,#f4f4f4)"></div>
<div class="a" style="left:1px;top:484px;width:35px;height:35px;border:1px solid #8e8e8e;background:linear-gradient(#e2e2e2,#f2f2f2 45%,#f4f4f4)"></div>
<div class="a" style="left:36px;top:484px;width:35px;height:35px;border:1px solid #8e8e8e;background:linear-gradient(#e2e2e2,#f2f2f2 45%,#f4f4f4)"></div>
<div class="a" style="left:1px;top:527px;width:35px;height:35px;border:1px solid #8e8e8e;background:linear-gradient(#e2e2e2,#f2f2f2 45%,#f4f4f4)"></div>
<div class="a" style="left:36px;top:527px;width:35px;height:35px;border:1px solid #8e8e8e;background:linear-gradient(#e2e2e2,#f2f2f2 45%,#f4f4f4)"></div>
<div class="a" style="left:1px;top:570px;width:35px;height:35px;border:1px solid #8e8e8e;background:linear-gradient(#e2e2e2,#f2f2f2 45%,#f4f4f4)"></div>
<div class="a" style="left:1px;top:613px;width:35px;height:35px;border:1px solid #a4a4a4;border-radius:4px;background:linear-gradient(#bcbcbc,#c8c8c8)"></div>
<div class="a" style="left:36px;top:613px;width:35px;height:35px;border:1px solid #8e8e8e;background:linear-gradient(#e2e2e2,#f2f2f2 45%,#f4f4f4)"></div>
<div class="a" style="left:1px;top:648px;width:35px;height:35px;border:1px solid #8e8e8e;background:linear-gradient(#e2e2e2,#f2f2f2 45%,#f4f4f4)"></div>
<div class="a" style="left:36px;top:648px;width:35px;height:35px;border:1px solid #8e8e8e;background:linear-gradient(#e2e2e2,#f2f2f2 45%,#f4f4f4)"></div>
<div class="a" style="left:1px;top:682px;width:35px;height:35px;border:1px solid #8e8e8e;background:linear-gradient(#e2e2e2,#f2f2f2 45%,#f4f4f4)"></div>
<div class="a" style="left:1px;top:726px;width:35px;height:35px;border:1px solid #8e8e8e;background:linear-gradient(#e2e2e2,#f2f2f2 45%,#f4f4f4)"></div>
<div class="a" style="left:36px;top:726px;width:35px;height:35px;border:1px solid #8e8e8e;background:linear-gradient(#e2e2e2,#f2f2f2 45%,#f4f4f4)"></div>
<div class="a" style="left:1px;top:769px;width:35px;height:35px;border:1px solid #8e8e8e;background:linear-gradient(#e2e2e2,#f2f2f2 45%,#f4f4f4)"></div>
<svg class="a" style="left:0;top:108px" width="71" height="690" viewBox="0 108 71 690"><path d="M13.5 172.5H21.5M17.5 168.5V176.5" stroke="#111" stroke-width="1.1"/><circle cx="42.5" cy="162.5" r="1.7" fill="#ff0000"/><circle cx="42.5" cy="169.5" r="1.7" fill="#ff0000"/><circle cx="42.5" cy="176.5" r="1.7" fill="#ff0000"/><circle cx="42.5" cy="183.4" r="1.7" fill="#ff0000"/><circle cx="49.4" cy="162.5" r="1.7" fill="#ff0000"/><circle cx="49.4" cy="169.5" r="1.7" fill="#ff0000"/><circle cx="49.4" cy="176.5" r="1.7" fill="#ff0000"/><circle cx="49.4" cy="183.4" r="1.7" fill="#ff0000"/><circle cx="56.5" cy="162.5" r="1.7" fill="#ff0000"/><circle cx="56.5" cy="169.5" r="1.7" fill="#ff0000"/><circle cx="56.5" cy="176.5" r="1.7" fill="#ff0000"/><circle cx="56.5" cy="183.4" r="1.7" fill="#ff0000"/><circle cx="63.4" cy="162.5" r="1.7" fill="#ff0000"/><circle cx="63.4" cy="169.5" r="1.7" fill="#ff0000"/><circle cx="63.4" cy="176.5" r="1.7" fill="#ff0000"/><circle cx="63.4" cy="183.4" r="1.7" fill="#ff0000"/><path d="M7.5 215.3L28.6 226.5M15.9 205.5Q16.5 217 28.6 218" stroke="#222" stroke-width="1.1" fill="none"/><circle cx="15.9" cy="205.5" r="1.9" fill="#ff0000"/><circle cx="7.5" cy="215.3" r="1.9" fill="#ff0000"/><circle cx="28.6" cy="218" r="1.9" fill="#ff0000"/><circle cx="28.6" cy="226.5" r="1.9" fill="#ff0000"/><path d="M42.5 216.7L63.8 205M51 226.5L51.8 221.5L54.3 217.3L58.6 214.2L63.5 213.8" stroke="#222" stroke-width="1.1" fill="none"/><circle cx="42.5" cy="216.7" r="1.6" fill="#ff0000"/><circle cx="47.8" cy="213.8" r="1.6" fill="#ff0000"/><circle cx="52.8" cy="211" r="1.6" fill="#ff0000"/><circle cx="58.3" cy="208.2" r="1.6" fill="#ff0000"/><circle cx="63.8" cy="205" r="1.6" fill="#ff0000"/><circle cx="51" cy="226.5" r="1.6" fill="#ff0000"/><circle cx="51.8" cy="221.5" r="1.6" fill="#ff0000"/><circle cx="54.3" cy="217.3" r="1.6" fill="#ff0000"/><circle cx="58.6" cy="214.2" r="1.6" fill="#ff0000"/><circle cx="63.5" cy="213.8" r="1.6" fill="#ff0000"/><path d="M9.5 241L19.3 252.3L28.5 248.3M19.3 252.3Q16 256 15.3 261.3" stroke="#222" stroke-width="1.1" fill="none"/><path d="M16 248Q19 244.5 22.5 247" stroke="#444" stroke-width="0.6" fill="none" stroke-dasharray="1 0.6"/><circle cx="19.3" cy="252.3" r="1.9" fill="#ff0000"/><circle cx="55.6" cy="248" r="6.6" stroke="#222" stroke-width="1.1" fill="none"/><path d="M43 259.5L50.7 245.2" stroke="#222" stroke-width="1.1" fill="none"/><circle cx="50.7" cy="245.2" r="1.9" fill="#ff0000"/><path d="M6.5 286.7L28.7 275.5M15.5 296Q16 285 28.5 283.3" stroke="#222" stroke-width="1.1" fill="none"/><circle cx="17.5" cy="281" r="1.9" fill="#ff0000"/><circle cx="28" cy="296" r="1.9" fill="#ff0000"/><circle cx="52.9" cy="286" r="9.9" stroke="#222" stroke-width="1.1" fill="none"/><circle cx="52.9" cy="276.1" r="1.9" fill="#ff0000"/><circle cx="43" cy="286" r="1.9" fill="#ff0000"/><circle cx="62.8" cy="286" r="1.9" fill="#ff0000"/><circle cx="52.9" cy="295.9" r="1.9" fill="#ff0000"/><circle cx="52.9" cy="286" r="1.9" fill="#ff0000"/><path d="M7 330L29 318.3M15.5 339.5Q16.5 327.5 28.8 326.3" stroke="#222" stroke-width="1.1" fill="none"/><circle cx="17.9" cy="324" r="1.9" fill="#ff0000"/><circle cx="19.3" cy="330.3" r="1.9" fill="#ff0000"/><rect x="41.5" y="319.5" width="23" height="19" fill="none" stroke="#111" stroke-width="1.5"/><path d="M43 337L63 321" stroke="#888" stroke-width="0.7" stroke-dasharray="2 1.5"/><circle cx="52.9" cy="328.7" r="1.9" fill="#ff0000"/><path d="M8 372.5L29.5 361M16 382Q17 371 29 369.6" stroke="#222" stroke-width="1.1" fill="none"/><path d="M6 368L12.5 365.5M10 364.3L12.5 365.5L11 368M19.5 383L21 378M19.3 379.5L21 378L22.5 380" stroke="#111" stroke-width="1.2" fill="none"/><circle cx="15.2" cy="369" r="1.9" fill="#ff0000"/><circle cx="19" cy="374" r="1.9" fill="#ff0000"/><path d="M42.4 373L64 361" stroke="#222" stroke-width="1" stroke-dasharray="2.2 1.6"/><path d="M41 369L46 366.5M44 365.3L46 366.5L44.8 368.5" stroke="#111" stroke-width="1.2" fill="none"/><circle cx="42.4" cy="373" r="1.5" fill="#111"/><circle cx="64" cy="361" r="1.5" fill="#111"/><circle cx="50" cy="368.5" r="1.9" fill="#ff0000"/><text x="40" y="389" font-size="11" fill="#111" font-family="Liberation Sans">1</text><text x="60" y="375.5" font-size="11" fill="#111" font-family="Liberation Sans">2</text><path d="M6 412.5L30 420M24.5 403L18.5 427.5" stroke="#222" stroke-width="1.1" fill="none"/><circle cx="21" cy="417.5" r="1.9" fill="#ff0000"/><path d="M43 416.6L53.5 419.5M62.6 407L60 417" stroke="#222" stroke-width="1.1" fill="none"/><circle cx="58.8" cy="421.5" r="1.9" fill="#ff0000"/><text x="18.5" y="462.5" font-size="11.5" fill="#222" text-anchor="middle" font-family="Liberation Sans">Auto</text><path d="M14.5 489V504.5H30.5" stroke="#222" stroke-width="1.3" fill="none"/><text x="6.5" y="496" font-size="10.5" fill="#111" font-family="Liberation Sans">y</text><text x="24" y="514.5" font-size="10.5" fill="#111" font-family="Liberation Sans">x</text><circle cx="28" cy="491" r="1.6" fill="#ff0000"/><path d="M41 510.5L57.8 493.2Q64.5 500 65 510.5Z" stroke="#222" stroke-width="1.2" fill="none"/><text x="43.5" y="501" font-size="10" fill="#111" font-family="Liberation Sans">r</text><text x="54.5" y="507.5" font-size="10" fill="#111" font-family="Liberation Sans">α</text><circle cx="57.8" cy="493.2" r="1.6" fill="#ff0000"/><path d="M9.8 535.8H26M9.8 535.8V552" stroke="#aaa" stroke-width="0.8" fill="none"/><circle cx="9.8" cy="535.8" r="2.2" fill="#ff0000"/><circle cx="26" cy="535.8" r="1.4" fill="#111"/><circle cx="9.8" cy="552" r="1.4" fill="#111"/><text x="15" y="555" font-size="10" fill="#111" font-family="Liberation Sans">1</text><text x="23.5" y="546.5" font-size="10" fill="#111" font-family="Liberation Sans">2</text><path d="M44.5 552H60.8V535.8" stroke="#aaa" stroke-width="0.8" fill="none"/><circle cx="60.8" cy="552" r="2.2" fill="#ff0000"/><circle cx="60.8" cy="535.8" r="1.4" fill="#111"/><circle cx="44.5" cy="552" r="1.4" fill="#111"/><text x="42" y="549" font-size="10" fill="#111" font-family="Liberation Sans">1</text><text x="52.5" y="542" font-size="10" fill="#111" font-family="Liberation Sans">2</text><g opacity="0.45"><path d="M7 578H27V596H15V592H7Z" fill="none" stroke="#e05050" stroke-width="0.8"/><circle cx="13.5" cy="584.5" r="3.5" fill="none" stroke="#e05050" stroke-width="0.8"/><path d="M18 590L23 585V590Z" fill="none" stroke="#e05050" stroke-width="0.8"/></g><circle cx="17.5" cy="587.5" r="1.6" fill="#f03030"/><path d="M14.5 630H21.5M18 626.5V633.5" stroke="#333" stroke-width="1"/><path d="M40.5 629H64.5M52.5 617V641" stroke="#111" stroke-width="1.1"/><circle cx="52.5" cy="629" r="3.3" fill="none" stroke="#f00" stroke-width="1.1"/><path d="M49.2 629H55.8M52.5 625.7V632.3" stroke="#f00" stroke-width="0.9"/><path d="M5.5 664H29.5" stroke="#111" stroke-width="1.1"/><circle cx="17.5" cy="664" r="3.3" fill="none" stroke="#f00" stroke-width="1.1"/><path d="M14.2 664H20.8M17.5 660.7V667.3" stroke="#f00" stroke-width="0.9"/><path d="M52.5 652V677" stroke="#111" stroke-width="1.1"/><circle cx="52.5" cy="664" r="3.3" fill="none" stroke="#f00" stroke-width="1.1"/><path d="M49.2 664H55.8M52.5 660.7V667.3" stroke="#f00" stroke-width="0.9"/><path d="M9 708L27.5 698" stroke="#111" stroke-width="1.1"/><path d="M9.5 689.5L10 692.5M13.5 688.5L14.2 691.5M18 689L18.8 692M22 691L23 693.5M25.5 694L26.5 696M27 701.5L30 702.5M27 706.5H30" stroke="#777" stroke-width="0.9"/><circle cx="8.5" cy="708.5" r="3.3" fill="none" stroke="#f00" stroke-width="1.1"/><path d="M5.2 708.5H11.8M8.5 705.2V711.8" stroke="#f00" stroke-width="0.9"/><circle cx="15" cy="737.5" r="3.3" fill="none" stroke="#f00" stroke-width="1.1"/><path d="M11.7 737.5H18.3M15 734.2V740.8" stroke="#f00" stroke-width="0.9"/><path d="M16.5 739V751L19.2 748.5L21.2 753L23 752.2L21 747.8H24.5Z" fill="#fff" stroke="#333" stroke-width="0.8"/><circle cx="47.2" cy="739.0" r="2.8" fill="none" stroke="#000" stroke-width="1.6"/><path d="M50 739.0H62.5V743.0M59.5 739.0V742.0" stroke="#000" stroke-width="2" fill="none"/><circle cx="52.5" cy="750.5" r="3.3" fill="none" stroke="#f00" stroke-width="1.1"/><path d="M49.2 750.5H55.8M52.5 747.2V753.8" stroke="#f00" stroke-width="0.9"/><circle cx="12.2" cy="783.0" r="2.8" fill="none" stroke="#000" stroke-width="1.6"/><path d="M15 783.0H27.5V787.0M24.5 783.0V786.0" stroke="#000" stroke-width="2" fill="none"/></svg>
<div class="a" style="left:72px;top:132px;width:1081px;height:23px;background:#ececec"></div><div class="a" style="left:95px;top:132px;width:1044px;height:23px;overflow:hidden">
<svg width="1081" height="23" style="position:absolute;left:-23px;top:0">
<line x1="25.5" y1="16" x2="25.5" y2="23" stroke="#555" stroke-width="1"/>
<text x="25.5" y="9.2" font-size="9.4" text-anchor="middle" fill="#222" letter-spacing="-0.5">-80</text>
<line x1="48.3" y1="16" x2="48.3" y2="23" stroke="#555" stroke-width="1"/>
<text x="48.3" y="9.2" font-size="9.4" text-anchor="middle" fill="#222" letter-spacing="-0.5">-70</text>
<line x1="71.0" y1="16" x2="71.0" y2="23" stroke="#555" stroke-width="1"/>
<text x="71.0" y="9.2" font-size="9.4" text-anchor="middle" fill="#222" letter-spacing="-0.5">-60</text>
<line x1="93.7" y1="16" x2="93.7" y2="23" stroke="#555" stroke-width="1"/>
<text x="93.7" y="9.2" font-size="9.4" text-anchor="middle" fill="#222" letter-spacing="-0.5">-50</text>
<line x1="116.5" y1="16" x2="116.5" y2="23" stroke="#555" stroke-width="1"/>
<text x="116.5" y="9.2" font-size="9.4" text-anchor="middle" fill="#222" letter-spacing="-0.5">-40</text>
<line x1="139.2" y1="16" x2="139.2" y2="23" stroke="#555" stroke-width="1"/>
<text x="139.2" y="9.2" font-size="9.4" text-anchor="middle" fill="#222" letter-spacing="-0.5">-30</text>
<line x1="161.9" y1="16" x2="161.9" y2="23" stroke="#555" stroke-width="1"/>
<text x="161.9" y="9.2" font-size="9.4" text-anchor="middle" fill="#222" letter-spacing="-0.5">-20</text>
<line x1="184.7" y1="16" x2="184.7" y2="23" stroke="#555" stroke-width="1"/>
<text x="184.7" y="9.2" font-size="9.4" text-anchor="middle" fill="#222" letter-spacing="-0.5">-10</text>
<line x1="207.4" y1="16" x2="207.4" y2="23" stroke="#555" stroke-width="1"/>
<text x="207.4" y="9.2" font-size="9.4" text-anchor="middle" fill="#222" letter-spacing="-0.5">0</text>
<line x1="230.1" y1="16" x2="230.1" y2="23" stroke="#555" stroke-width="1"/>
<text x="230.1" y="9.2" font-size="9.4" text-anchor="middle" fill="#222" letter-spacing="-0.5">10</text>
<line x1="252.9" y1="16" x2="252.9" y2="23" stroke="#555" stroke-width="1"/>
<text x="252.9" y="9.2" font-size="9.4" text-anchor="middle" fill="#222" letter-spacing="-0.5">20</text>
<line x1="275.6" y1="16" x2="275.6" y2="23" stroke="#555" stroke-width="1"/>
<text x="275.6" y="9.2" font-size="9.4" text-anchor="middle" fill="#222" letter-spacing="-0.5">30</text>
<line x1="298.3" y1="16" x2="298.3" y2="23" stroke="#555" stroke-width="1"/>
<text x="298.3" y="9.2" font-size="9.4" text-anchor="middle" fill="#222" letter-spacing="-0.5">40</text>
<line x1="321.1" y1="16" x2="321.1" y2="23" stroke="#555" stroke-width="1"/>
<text x="321.1" y="9.2" font-size="9.4" text-anchor="middle" fill="#222" letter-spacing="-0.5">50</text>
<line x1="343.8" y1="16" x2="343.8" y2="23" stroke="#555" stroke-width="1"/>
<text x="343.8" y="9.2" font-size="9.4" text-anchor="middle" fill="#222" letter-spacing="-0.5">60</text>
<line x1="366.5" y1="16" x2="366.5" y2="23" stroke="#555" stroke-width="1"/>
<text x="366.5" y="9.2" font-size="9.4" text-anchor="middle" fill="#222" letter-spacing="-0.5">70</text>
<line x1="389.3" y1="16" x2="389.3" y2="23" stroke="#555" stroke-width="1"/>
<text x="389.3" y="9.2" font-size="9.4" text-anchor="middle" fill="#222" letter-spacing="-0.5">80</text>
<line x1="412.0" y1="16" x2="412.0" y2="23" stroke="#555" stroke-width="1"/>
<text x="412.0" y="9.2" font-size="9.4" text-anchor="middle" fill="#222" letter-spacing="-0.5">90</text>
<line x1="434.7" y1="16" x2="434.7" y2="23" stroke="#555" stroke-width="1"/>
<text x="434.7" y="9.2" font-size="9.4" text-anchor="middle" fill="#222" letter-spacing="-0.5">100</text>
<line x1="457.5" y1="16" x2="457.5" y2="23" stroke="#555" stroke-width="1"/>
<text x="457.5" y="9.2" font-size="9.4" text-anchor="middle" fill="#222" letter-spacing="-0.5">110</text>
<line x1="480.2" y1="16" x2="480.2" y2="23" stroke="#555" stroke-width="1"/>
<text x="480.2" y="9.2" font-size="9.4" text-anchor="middle" fill="#222" letter-spacing="-0.5">120</text>
<line x1="502.9" y1="16" x2="502.9" y2="23" stroke="#555" stroke-width="1"/>
<text x="502.9" y="9.2" font-size="9.4" text-anchor="middle" fill="#222" letter-spacing="-0.5">130</text>
<line x1="525.7" y1="16" x2="525.7" y2="23" stroke="#555" stroke-width="1"/>
<text x="525.7" y="9.2" font-size="9.4" text-anchor="middle" fill="#222" letter-spacing="-0.5">140</text>
<line x1="548.4" y1="16" x2="548.4" y2="23" stroke="#555" stroke-width="1"/>
<text x="548.4" y="9.2" font-size="9.4" text-anchor="middle" fill="#222" letter-spacing="-0.5">150</text>
<line x1="571.1" y1="16" x2="571.1" y2="23" stroke="#555" stroke-width="1"/>
<text x="571.1" y="9.2" font-size="9.4" text-anchor="middle" fill="#222" letter-spacing="-0.5">160</text>
<line x1="593.9" y1="16" x2="593.9" y2="23" stroke="#555" stroke-width="1"/>
<text x="593.9" y="9.2" font-size="9.4" text-anchor="middle" fill="#222" letter-spacing="-0.5">170</text>
<line x1="616.6" y1="16" x2="616.6" y2="23" stroke="#555" stroke-width="1"/>
<text x="616.6" y="9.2" font-size="9.4" text-anchor="middle" fill="#222" letter-spacing="-0.5">180</text>
<line x1="639.3" y1="16" x2="639.3" y2="23" stroke="#555" stroke-width="1"/>
<text x="639.3" y="9.2" font-size="9.4" text-anchor="middle" fill="#222" letter-spacing="-0.5">190</text>
<line x1="662.1" y1="16" x2="662.1" y2="23" stroke="#555" stroke-width="1"/>
<text x="662.1" y="9.2" font-size="9.4" text-anchor="middle" fill="#222" letter-spacing="-0.5">200</text>
<line x1="684.8" y1="16" x2="684.8" y2="23" stroke="#555" stroke-width="1"/>
<text x="684.8" y="9.2" font-size="9.4" text-anchor="middle" fill="#222" letter-spacing="-0.5">210</text>
<line x1="707.5" y1="16" x2="707.5" y2="23" stroke="#555" stroke-width="1"/>
<text x="707.5" y="9.2" font-size="9.4" text-anchor="middle" fill="#222" letter-spacing="-0.5">220</text>
<line x1="730.3" y1="16" x2="730.3" y2="23" stroke="#555" stroke-width="1"/>
<text x="730.3" y="9.2" font-size="9.4" text-anchor="middle" fill="#222" letter-spacing="-0.5">230</text>
<line x1="753.0" y1="16" x2="753.0" y2="23" stroke="#555" stroke-width="1"/>
<text x="753.0" y="9.2" font-size="9.4" text-anchor="middle" fill="#222" letter-spacing="-0.5">240</text>
<line x1="775.7" y1="16" x2="775.7" y2="23" stroke="#555" stroke-width="1"/>
<text x="775.7" y="9.2" font-size="9.4" text-anchor="middle" fill="#222" letter-spacing="-0.5">250</text>
<line x1="798.5" y1="16" x2="798.5" y2="23" stroke="#555" stroke-width="1"/>
<text x="798.5" y="9.2" font-size="9.4" text-anchor="middle" fill="#222" letter-spacing="-0.5">260</text>
<line x1="821.2" y1="16" x2="821.2" y2="23" stroke="#555" stroke-width="1"/>
<text x="821.2" y="9.2" font-size="9.4" text-anchor="middle" fill="#222" letter-spacing="-0.5">270</text>
<line x1="843.9" y1="16" x2="843.9" y2="23" stroke="#555" stroke-width="1"/>
<text x="843.9" y="9.2" font-size="9.4" text-anchor="middle" fill="#222" letter-spacing="-0.5">280</text>
<line x1="866.7" y1="16" x2="866.7" y2="23" stroke="#555" stroke-width="1"/>
<text x="866.7" y="9.2" font-size="9.4" text-anchor="middle" fill="#222" letter-spacing="-0.5">290</text>
<line x1="889.4" y1="16" x2="889.4" y2="23" stroke="#555" stroke-width="1"/>
<text x="889.4" y="9.2" font-size="9.4" text-anchor="middle" fill="#222" letter-spacing="-0.5">300</text>
<line x1="912.1" y1="16" x2="912.1" y2="23" stroke="#555" stroke-width="1"/>
<text x="912.1" y="9.2" font-size="9.4" text-anchor="middle" fill="#222" letter-spacing="-0.5">310</text>
<line x1="934.9" y1="16" x2="934.9" y2="23" stroke="#555" stroke-width="1"/>
<text x="934.9" y="9.2" font-size="9.4" text-anchor="middle" fill="#222" letter-spacing="-0.5">320</text>
<line x1="957.6" y1="16" x2="957.6" y2="23" stroke="#555" stroke-width="1"/>
<text x="957.6" y="9.2" font-size="9.4" text-anchor="middle" fill="#222" letter-spacing="-0.5">330</text>
<line x1="980.3" y1="16" x2="980.3" y2="23" stroke="#555" stroke-width="1"/>
<text x="980.3" y="9.2" font-size="9.4" text-anchor="middle" fill="#222" letter-spacing="-0.5">340</text>
<line x1="1003.1" y1="16" x2="1003.1" y2="23" stroke="#555" stroke-width="1"/>
<text x="1003.1" y="9.2" font-size="9.4" text-anchor="middle" fill="#222" letter-spacing="-0.5">350</text>
<line x1="1025.8" y1="16" x2="1025.8" y2="23" stroke="#555" stroke-width="1"/>
<text x="1025.8" y="9.2" font-size="9.4" text-anchor="middle" fill="#222" letter-spacing="-0.5">360</text>
<line x1="1048.5" y1="16" x2="1048.5" y2="23" stroke="#555" stroke-width="1"/>
<text x="1048.5" y="9.2" font-size="9.4" text-anchor="middle" fill="#222" letter-spacing="-0.5">370</text>
<line x1="1071.3" y1="16" x2="1071.3" y2="23" stroke="#555" stroke-width="1"/>
<text x="1071.3" y="9.2" font-size="9.4" text-anchor="middle" fill="#222" letter-spacing="-0.5">380</text>
<path d="M1019.7 13L1031 13L1025.4 18.6Z" fill="#000" stroke="#fff" stroke-width="0.8" paint-order="stroke"/>
</svg>
</div>
<div class="a" style="left:72px;top:155px;width:23px;height:591px;background:#ececec;overflow:hidden">
<svg width="23" height="591" style="position:absolute;left:0;top:0">
<line x1="16" y1="572.5" x2="23" y2="572.5" stroke="#555" stroke-width="1"/>
<text transform="translate(9.0,572.5) rotate(-90)" x="0" y="0" font-size="9.4" text-anchor="middle" fill="#222" letter-spacing="-0.5">-20</text>
<line x1="16" y1="549.7" x2="23" y2="549.7" stroke="#555" stroke-width="1"/>
<text transform="translate(9.0,549.7) rotate(-90)" x="0" y="0" font-size="9.4" text-anchor="middle" fill="#222" letter-spacing="-0.5">-10</text>
<line x1="16" y1="527.0" x2="23" y2="527.0" stroke="#555" stroke-width="1"/>
<text transform="translate(9.0,527.0) rotate(-90)" x="0" y="0" font-size="9.4" text-anchor="middle" fill="#222" letter-spacing="-0.5">0</text>
<line x1="16" y1="504.3" x2="23" y2="504.3" stroke="#555" stroke-width="1"/>
<text transform="translate(9.0,504.3) rotate(-90)" x="0" y="0" font-size="9.4" text-anchor="middle" fill="#222" letter-spacing="-0.5">10</text>
<line x1="16" y1="481.5" x2="23" y2="481.5" stroke="#555" stroke-width="1"/>
<text transform="translate(9.0,481.5) rotate(-90)" x="0" y="0" font-size="9.4" text-anchor="middle" fill="#222" letter-spacing="-0.5">20</text>
<line x1="16" y1="458.8" x2="23" y2="458.8" stroke="#555" stroke-width="1"/>
<text transform="translate(9.0,458.8) rotate(-90)" x="0" y="0" font-size="9.4" text-anchor="middle" fill="#222" letter-spacing="-0.5">30</text>
<line x1="16" y1="436.1" x2="23" y2="436.1" stroke="#555" stroke-width="1"/>
<text transform="translate(9.0,436.1) rotate(-90)" x="0" y="0" font-size="9.4" text-anchor="middle" fill="#222" letter-spacing="-0.5">40</text>
<line x1="16" y1="413.3" x2="23" y2="413.3" stroke="#555" stroke-width="1"/>
<text transform="translate(9.0,413.3) rotate(-90)" x="0" y="0" font-size="9.4" text-anchor="middle" fill="#222" letter-spacing="-0.5">50</text>
<line x1="16" y1="390.6" x2="23" y2="390.6" stroke="#555" stroke-width="1"/>
<text transform="translate(9.0,390.6) rotate(-90)" x="0" y="0" font-size="9.4" text-anchor="middle" fill="#222" letter-spacing="-0.5">60</text>
<line x1="16" y1="367.9" x2="23" y2="367.9" stroke="#555" stroke-width="1"/>
<text transform="translate(9.0,367.9) rotate(-90)" x="0" y="0" font-size="9.4" text-anchor="middle" fill="#222" letter-spacing="-0.5">70</text>
<line x1="16" y1="345.1" x2="23" y2="345.1" stroke="#555" stroke-width="1"/>
<text transform="translate(9.0,345.1) rotate(-90)" x="0" y="0" font-size="9.4" text-anchor="middle" fill="#222" letter-spacing="-0.5">80</text>
<line x1="16" y1="322.4" x2="23" y2="322.4" stroke="#555" stroke-width="1"/>
<text transform="translate(9.0,322.4) rotate(-90)" x="0" y="0" font-size="9.4" text-anchor="middle" fill="#222" letter-spacing="-0.5">90</text>
<line x1="16" y1="299.7" x2="23" y2="299.7" stroke="#555" stroke-width="1"/>
<text transform="translate(9.0,299.7) rotate(-90)" x="0" y="0" font-size="9.4" text-anchor="middle" fill="#222" letter-spacing="-0.5">100</text>
<line x1="16" y1="276.9" x2="23" y2="276.9" stroke="#555" stroke-width="1"/>
<text transform="translate(9.0,276.9) rotate(-90)" x="0" y="0" font-size="9.4" text-anchor="middle" fill="#222" letter-spacing="-0.5">110</text>
<line x1="16" y1="254.2" x2="23" y2="254.2" stroke="#555" stroke-width="1"/>
<text transform="translate(9.0,254.2) rotate(-90)" x="0" y="0" font-size="9.4" text-anchor="middle" fill="#222" letter-spacing="-0.5">120</text>
<line x1="16" y1="231.5" x2="23" y2="231.5" stroke="#555" stroke-width="1"/>
<text transform="translate(9.0,231.5) rotate(-90)" x="0" y="0" font-size="9.4" text-anchor="middle" fill="#222" letter-spacing="-0.5">130</text>
<line x1="16" y1="208.7" x2="23" y2="208.7" stroke="#555" stroke-width="1"/>
<text transform="translate(9.0,208.7) rotate(-90)" x="0" y="0" font-size="9.4" text-anchor="middle" fill="#222" letter-spacing="-0.5">140</text>
<line x1="16" y1="186.0" x2="23" y2="186.0" stroke="#555" stroke-width="1"/>
<text transform="translate(9.0,186.0) rotate(-90)" x="0" y="0" font-size="9.4" text-anchor="middle" fill="#222" letter-spacing="-0.5">150</text>
<line x1="16" y1="163.3" x2="23" y2="163.3" stroke="#555" stroke-width="1"/>
<text transform="translate(9.0,163.3) rotate(-90)" x="0" y="0" font-size="9.4" text-anchor="middle" fill="#222" letter-spacing="-0.5">160</text>
<line x1="16" y1="140.5" x2="23" y2="140.5" stroke="#555" stroke-width="1"/>
<text transform="translate(9.0,140.5) rotate(-90)" x="0" y="0" font-size="9.4" text-anchor="middle" fill="#222" letter-spacing="-0.5">170</text>
<line x1="16" y1="117.8" x2="23" y2="117.8" stroke="#555" stroke-width="1"/>
<text transform="translate(9.0,117.8) rotate(-90)" x="0" y="0" font-size="9.4" text-anchor="middle" fill="#222" letter-spacing="-0.5">180</text>
<line x1="16" y1="95.1" x2="23" y2="95.1" stroke="#555" stroke-width="1"/>
<text transform="translate(9.0,95.1) rotate(-90)" x="0" y="0" font-size="9.4" text-anchor="middle" fill="#222" letter-spacing="-0.5">190</text>
<line x1="16" y1="72.3" x2="23" y2="72.3" stroke="#555" stroke-width="1"/>
<text transform="translate(9.0,72.3) rotate(-90)" x="0" y="0" font-size="9.4" text-anchor="middle" fill="#222" letter-spacing="-0.5">200</text>
<line x1="16" y1="49.6" x2="23" y2="49.6" stroke="#555" stroke-width="1"/>
<text transform="translate(9.0,49.6) rotate(-90)" x="0" y="0" font-size="9.4" text-anchor="middle" fill="#222" letter-spacing="-0.5">210</text>
<line x1="16" y1="26.9" x2="23" y2="26.9" stroke="#555" stroke-width="1"/>
<text transform="translate(9.0,26.9) rotate(-90)" x="0" y="0" font-size="9.4" text-anchor="middle" fill="#222" letter-spacing="-0.5">220</text>
<line x1="16" y1="4.1" x2="23" y2="4.1" stroke="#555" stroke-width="1"/>
<text transform="translate(9.0,4.1) rotate(-90)" x="0" y="0" font-size="9.4" text-anchor="middle" fill="#222" letter-spacing="-0.5">230</text>
<path d="M12.9 89.8L12.9 101L18.6 95.4Z" fill="#000" stroke="#fff" stroke-width="0.8" paint-order="stroke"/>
</svg>
</div>
<svg class="a" style="left:95px;top:155px" width="1044" height="577" viewBox="95 155 1044 577">
<defs><clipPath id="cc"><rect x="95" y="155" width="1044" height="577"/></clipPath></defs>
<g clip-path="url(#cc)">
<path d="M97 750h1v1h-1zM97 727h1v1h-1zM97 704h1v1h-1zM97 682h1v1h-1zM97 659h1v1h-1zM97 636h1v1h-1zM97 613h1v1h-1zM97 591h1v1h-1zM97 568h1v1h-1zM97 545h1v1h-1zM97 522h1v1h-1zM97 500h1v1h-1zM97 477h1v1h-1zM97 454h1v1h-1zM97 431h1v1h-1zM97 409h1v1h-1zM97 386h1v1h-1zM97 363h1v1h-1zM97 341h1v1h-1zM97 318h1v1h-1zM97 295h1v1h-1zM97 272h1v1h-1zM97 250h1v1h-1zM97 227h1v1h-1zM97 204h1v1h-1zM97 181h1v1h-1zM97 159h1v1h-1zM120 750h1v1h-1zM120 727h1v1h-1zM120 704h1v1h-1zM120 682h1v1h-1zM120 659h1v1h-1zM120 636h1v1h-1zM120 613h1v1h-1zM120 591h1v1h-1zM120 568h1v1h-1zM120 545h1v1h-1zM120 522h1v1h-1zM120 500h1v1h-1zM120 477h1v1h-1zM120 454h1v1h-1zM120 431h1v1h-1zM120 409h1v1h-1zM120 386h1v1h-1zM120 363h1v1h-1zM120 341h1v1h-1zM120 318h1v1h-1zM120 295h1v1h-1zM120 272h1v1h-1zM120 250h1v1h-1zM120 227h1v1h-1zM120 204h1v1h-1zM120 181h1v1h-1zM120 159h1v1h-1zM143 750h1v1h-1zM143 727h1v1h-1zM143 704h1v1h-1zM143 682h1v1h-1zM143 659h1v1h-1zM143 636h1v1h-1zM143 613h1v1h-1zM143 591h1v1h-1zM143 568h1v1h-1zM143 545h1v1h-1zM143 522h1v1h-1zM143 500h1v1h-1zM143 477h1v1h-1zM143 454h1v1h-1zM143 431h1v1h-1zM143 409h1v1h-1zM143 386h1v1h-1zM143 363h1v1h-1zM143 341h1v1h-1zM143 318h1v1h-1zM143 295h1v1h-1zM143 272h1v1h-1zM143 250h1v1h-1zM143 227h1v1h-1zM143 204h1v1h-1zM143 181h1v1h-1zM143 159h1v1h-1zM165 750h1v1h-1zM165 727h1v1h-1zM165 704h1v1h-1zM165 682h1v1h-1zM165 659h1v1h-1zM165 636h1v1h-1zM165 613h1v1h-1zM165 591h1v1h-1zM165 568h1v1h-1zM165 545h1v1h-1zM165 522h1v1h-1zM165 500h1v1h-1zM165 477h1v1h-1zM165 454h1v1h-1zM165 431h1v1h-1zM165 409h1v1h-1zM165 386h1v1h-1zM165 363h1v1h-1zM165 341h1v1h-1zM165 318h1v1h-1zM165 295h1v1h-1zM165 272h1v1h-1zM165 250h1v1h-1zM165 227h1v1h-1zM165 204h1v1h-1zM165 181h1v1h-1zM165 159h1v1h-1zM188 750h1v1h-1zM188 727h1v1h-1zM188 704h1v1h-1zM188 682h1v1h-1zM188 659h1v1h-1zM188 636h1v1h-1zM188 613h1v1h-1zM188 591h1v1h-1zM188 568h1v1h-1zM188 545h1v1h-1zM188 522h1v1h-1zM188 500h1v1h-1zM188 477h1v1h-1zM188 454h1v1h-1zM188 431h1v1h-1zM188 409h1v1h-1zM188 386h1v1h-1zM188 363h1v1h-1zM188 341h1v1h-1zM188 318h1v1h-1zM188 295h1v1h-1zM188 272h1v1h-1zM188 250h1v1h-1zM188 227h1v1h-1zM188 204h1v1h-1zM188 181h1v1h-1zM188 159h1v1h-1zM211 750h1v1h-1zM211 727h1v1h-1zM211 704h1v1h-1zM211 682h1v1h-1zM211 659h1v1h-1zM211 636h1v1h-1zM211 613h1v1h-1zM211 591h1v1h-1zM211 568h1v1h-1zM211 545h1v1h-1zM211 522h1v1h-1zM211 500h1v1h-1zM211 477h1v1h-1zM211 454h1v1h-1zM211 431h1v1h-1zM211 409h1v1h-1zM211 386h1v1h-1zM211 363h1v1h-1zM211 341h1v1h-1zM211 318h1v1h-1zM211 295h1v1h-1zM211 272h1v1h-1zM211 250h1v1h-1zM211 227h1v1h-1zM211 204h1v1h-1zM211 181h1v1h-1zM211 159h1v1h-1zM233 750h1v1h-1zM233 727h1v1h-1zM233 704h1v1h-1zM233 682h1v1h-1zM233 659h1v1h-1zM233 636h1v1h-1zM233 613h1v1h-1zM233 591h1v1h-1zM233 568h1v1h-1zM233 545h1v1h-1zM233 522h1v1h-1zM233 500h1v1h-1zM233 477h1v1h-1zM233 454h1v1h-1zM233 431h1v1h-1zM233 409h1v1h-1zM233 386h1v1h-1zM233 363h1v1h-1zM233 341h1v1h-1zM233 318h1v1h-1zM233 295h1v1h-1zM233 272h1v1h-1zM233 250h1v1h-1zM233 227h1v1h-1zM233 204h1v1h-1zM233 181h1v1h-1zM233 159h1v1h-1zM256 750h1v1h-1zM256 727h1v1h-1zM256 704h1v1h-1zM256 682h1v1h-1zM256 659h1v1h-1zM256 636h1v1h-1zM256 613h1v1h-1zM256 591h1v1h-1zM256 568h1v1h-1zM256 545h1v1h-1zM256 522h1v1h-1zM256 500h1v1h-1zM256 477h1v1h-1zM256 454h1v1h-1zM256 431h1v1h-1zM256 409h1v1h-1zM256 386h1v1h-1zM256 363h1v1h-1zM256 341h1v1h-1zM256 318h1v1h-1zM256 295h1v1h-1zM256 272h1v1h-1zM256 250h1v1h-1zM256 227h1v1h-1zM256 204h1v1h-1zM256 181h1v1h-1zM256 159h1v1h-1zM279 750h1v1h-1zM279 727h1v1h-1zM279 704h1v1h-1zM279 682h1v1h-1zM279 659h1v1h-1zM279 636h1v1h-1zM279 613h1v1h-1zM279 591h1v1h-1zM279 568h1v1h-1zM279 545h1v1h-1zM279 522h1v1h-1zM279 500h1v1h-1zM279 477h1v1h-1zM279 454h1v1h-1zM279 431h1v1h-1zM279 409h1v1h-1zM279 386h1v1h-1zM279 363h1v1h-1zM279 341h1v1h-1zM279 318h1v1h-1zM279 295h1v1h-1zM279 272h1v1h-1zM279 250h1v1h-1zM279 227h1v1h-1zM279 204h1v1h-1zM279 181h1v1h-1zM279 159h1v1h-1zM302 750h1v1h-1zM302 727h1v1h-1zM302 704h1v1h-1zM302 682h1v1h-1zM302 659h1v1h-1zM302 636h1v1h-1zM302 613h1v1h-1zM302 591h1v1h-1zM302 568h1v1h-1zM302 545h1v1h-1zM302 522h1v1h-1zM302 500h1v1h-1zM302 477h1v1h-1zM302 454h1v1h-1zM302 431h1v1h-1zM302 409h1v1h-1zM302 386h1v1h-1zM302 363h1v1h-1zM302 341h1v1h-1zM302 318h1v1h-1zM302 295h1v1h-1zM302 272h1v1h-1zM302 250h1v1h-1zM302 227h1v1h-1zM302 204h1v1h-1zM302 181h1v1h-1zM302 159h1v1h-1zM324 750h1v1h-1zM324 727h1v1h-1zM324 704h1v1h-1zM324 682h1v1h-1zM324 659h1v1h-1zM324 636h1v1h-1zM324 613h1v1h-1zM324 591h1v1h-1zM324 568h1v1h-1zM324 545h1v1h-1zM324 522h1v1h-1zM324 500h1v1h-1zM324 477h1v1h-1zM324 454h1v1h-1zM324 431h1v1h-1zM324 409h1v1h-1zM324 386h1v1h-1zM324 363h1v1h-1zM324 341h1v1h-1zM324 318h1v1h-1zM324 295h1v1h-1zM324 272h1v1h-1zM324 250h1v1h-1zM324 227h1v1h-1zM324 204h1v1h-1zM324 181h1v1h-1zM324 159h1v1h-1zM347 750h1v1h-1zM347 727h1v1h-1zM347 704h1v1h-1zM347 682h1v1h-1zM347 659h1v1h-1zM347 636h1v1h-1zM347 613h1v1h-1zM347 591h1v1h-1zM347 568h1v1h-1zM347 545h1v1h-1zM347 522h1v1h-1zM347 500h1v1h-1zM347 477h1v1h-1zM347 454h1v1h-1zM347 431h1v1h-1zM347 409h1v1h-1zM347 386h1v1h-1zM347 363h1v1h-1zM347 341h1v1h-1zM347 318h1v1h-1zM347 295h1v1h-1zM347 272h1v1h-1zM347 250h1v1h-1zM347 227h1v1h-1zM347 204h1v1h-1zM347 181h1v1h-1zM347 159h1v1h-1zM370 750h1v1h-1zM370 727h1v1h-1zM370 704h1v1h-1zM370 682h1v1h-1zM370 659h1v1h-1zM370 636h1v1h-1zM370 613h1v1h-1zM370 591h1v1h-1zM370 568h1v1h-1zM370 545h1v1h-1zM370 522h1v1h-1zM370 500h1v1h-1zM370 477h1v1h-1zM370 454h1v1h-1zM370 431h1v1h-1zM370 409h1v1h-1zM370 386h1v1h-1zM370 363h1v1h-1zM370 341h1v1h-1zM370 318h1v1h-1zM370 295h1v1h-1zM370 272h1v1h-1zM370 250h1v1h-1zM370 227h1v1h-1zM370 204h1v1h-1zM370 181h1v1h-1zM370 159h1v1h-1zM393 750h1v1h-1zM393 727h1v1h-1zM393 704h1v1h-1zM393 682h1v1h-1zM393 659h1v1h-1zM393 636h1v1h-1zM393 613h1v1h-1zM393 591h1v1h-1zM393 568h1v1h-1zM393 545h1v1h-1zM393 522h1v1h-1zM393 500h1v1h-1zM393 477h1v1h-1zM393 454h1v1h-1zM393 431h1v1h-1zM393 409h1v1h-1zM393 386h1v1h-1zM393 363h1v1h-1zM393 341h1v1h-1zM393 318h1v1h-1zM393 295h1v1h-1zM393 272h1v1h-1zM393 250h1v1h-1zM393 227h1v1h-1zM393 204h1v1h-1zM393 181h1v1h-1zM393 159h1v1h-1zM415 750h1v1h-1zM415 727h1v1h-1zM415 704h1v1h-1zM415 682h1v1h-1zM415 659h1v1h-1zM415 636h1v1h-1zM415 613h1v1h-1zM415 591h1v1h-1zM415 568h1v1h-1zM415 545h1v1h-1zM415 522h1v1h-1zM415 500h1v1h-1zM415 477h1v1h-1zM415 454h1v1h-1zM415 431h1v1h-1zM415 409h1v1h-1zM415 386h1v1h-1zM415 363h1v1h-1zM415 341h1v1h-1zM415 318h1v1h-1zM415 295h1v1h-1zM415 272h1v1h-1zM415 250h1v1h-1zM415 227h1v1h-1zM415 204h1v1h-1zM415 181h1v1h-1zM415 159h1v1h-1zM438 750h1v1h-1zM438 727h1v1h-1zM438 704h1v1h-1zM438 682h1v1h-1zM438 659h1v1h-1zM438 636h1v1h-1zM438 613h1v1h-1zM438 591h1v1h-1zM438 568h1v1h-1zM438 545h1v1h-1zM438 522h1v1h-1zM438 500h1v1h-1zM438 477h1v1h-1zM438 454h1v1h-1zM438 431h1v1h-1zM438 409h1v1h-1zM438 386h1v1h-1zM438 363h1v1h-1zM438 341h1v1h-1zM438 318h1v1h-1zM438 295h1v1h-1zM438 272h1v1h-1zM438 250h1v1h-1zM438 227h1v1h-1zM438 204h1v1h-1zM438 181h1v1h-1zM438 159h1v1h-1zM461 750h1v1h-1zM461 727h1v1h-1zM461 704h1v1h-1zM461 682h1v1h-1zM461 659h1v1h-1zM461 636h1v1h-1zM461 613h1v1h-1zM461 591h1v1h-1zM461 568h1v1h-1zM461 545h1v1h-1zM461 522h1v1h-1zM461 500h1v1h-1zM461 477h1v1h-1zM461 454h1v1h-1zM461 431h1v1h-1zM461 409h1v1h-1zM461 386h1v1h-1zM461 363h1v1h-1zM461 341h1v1h-1zM461 318h1v1h-1zM461 295h1v1h-1zM461 272h1v1h-1zM461 250h1v1h-1zM461 227h1v1h-1zM461 204h1v1h-1zM461 181h1v1h-1zM461 159h1v1h-1zM483 750h1v1h-1zM483 727h1v1h-1zM483 704h1v1h-1zM483 682h1v1h-1zM483 659h1v1h-1zM483 636h1v1h-1zM483 613h1v1h-1zM483 591h1v1h-1zM483 568h1v1h-1zM483 545h1v1h-1zM483 522h1v1h-1zM483 500h1v1h-1zM483 477h1v1h-1zM483 454h1v1h-1zM483 431h1v1h-1zM483 409h1v1h-1zM483 386h1v1h-1zM483 363h1v1h-1zM483 341h1v1h-1zM483 318h1v1h-1zM483 295h1v1h-1zM483 272h1v1h-1zM483 250h1v1h-1zM483 227h1v1h-1zM483 204h1v1h-1zM483 181h1v1h-1zM483 159h1v1h-1zM506 750h1v1h-1zM506 727h1v1h-1zM506 704h1v1h-1zM506 682h1v1h-1zM506 659h1v1h-1zM506 636h1v1h-1zM506 613h1v1h-1zM506 591h1v1h-1zM506 568h1v1h-1zM506 545h1v1h-1zM506 522h1v1h-1zM506 500h1v1h-1zM506 477h1v1h-1zM506 454h1v1h-1zM506 431h1v1h-1zM506 409h1v1h-1zM506 386h1v1h-1zM506 363h1v1h-1zM506 341h1v1h-1zM506 318h1v1h-1zM506 295h1v1h-1zM506 272h1v1h-1zM506 250h1v1h-1zM506 227h1v1h-1zM506 204h1v1h-1zM506 181h1v1h-1zM506 159h1v1h-1zM529 750h1v1h-1zM529 727h1v1h-1zM529 704h1v1h-1zM529 682h1v1h-1zM529 659h1v1h-1zM529 636h1v1h-1zM529 613h1v1h-1zM529 591h1v1h-1zM529 568h1v1h-1zM529 545h1v1h-1zM529 522h1v1h-1zM529 500h1v1h-1zM529 477h1v1h-1zM529 454h1v1h-1zM529 431h1v1h-1zM529 409h1v1h-1zM529 386h1v1h-1zM529 363h1v1h-1zM529 341h1v1h-1zM529 318h1v1h-1zM529 295h1v1h-1zM529 272h1v1h-1zM529 250h1v1h-1zM529 227h1v1h-1zM529 204h1v1h-1zM529 181h1v1h-1zM529 159h1v1h-1zM552 750h1v1h-1zM552 727h1v1h-1zM552 704h1v1h-1zM552 682h1v1h-1zM552 659h1v1h-1zM552 636h1v1h-1zM552 613h1v1h-1zM552 591h1v1h-1zM552 568h1v1h-1zM552 545h1v1h-1zM552 522h1v1h-1zM552 500h1v1h-1zM552 477h1v1h-1zM552 454h1v1h-1zM552 431h1v1h-1zM552 409h1v1h-1zM552 386h1v1h-1zM552 363h1v1h-1zM552 341h1v1h-1zM552 318h1v1h-1zM552 295h1v1h-1zM552 272h1v1h-1zM552 250h1v1h-1zM552 227h1v1h-1zM552 204h1v1h-1zM552 181h1v1h-1zM552 159h1v1h-1zM574 750h1v1h-1zM574 727h1v1h-1zM574 704h1v1h-1zM574 682h1v1h-1zM574 659h1v1h-1zM574 636h1v1h-1zM574 613h1v1h-1zM574 591h1v1h-1zM574 568h1v1h-1zM574 545h1v1h-1zM574 522h1v1h-1zM574 500h1v1h-1zM574 477h1v1h-1zM574 454h1v1h-1zM574 431h1v1h-1zM574 409h1v1h-1zM574 386h1v1h-1zM574 363h1v1h-1zM574 341h1v1h-1zM574 318h1v1h-1zM574 295h1v1h-1zM574 272h1v1h-1zM574 250h1v1h-1zM574 227h1v1h-1zM574 204h1v1h-1zM574 181h1v1h-1zM574 159h1v1h-1zM597 750h1v1h-1zM597 727h1v1h-1zM597 704h1v1h-1zM597 682h1v1h-1zM597 659h1v1h-1zM597 636h1v1h-1zM597 613h1v1h-1zM597 591h1v1h-1zM597 568h1v1h-1zM597 545h1v1h-1zM597 522h1v1h-1zM597 500h1v1h-1zM597 477h1v1h-1zM597 454h1v1h-1zM597 431h1v1h-1zM597 409h1v1h-1zM597 386h1v1h-1zM597 363h1v1h-1zM597 341h1v1h-1zM597 318h1v1h-1zM597 295h1v1h-1zM597 272h1v1h-1zM597 250h1v1h-1zM597 227h1v1h-1zM597 204h1v1h-1zM597 181h1v1h-1zM597 159h1v1h-1zM620 750h1v1h-1zM620 727h1v1h-1zM620 704h1v1h-1zM620 682h1v1h-1zM620 659h1v1h-1zM620 636h1v1h-1zM620 613h1v1h-1zM620 591h1v1h-1zM620 568h1v1h-1zM620 545h1v1h-1zM620 522h1v1h-1zM620 500h1v1h-1zM620 477h1v1h-1zM620 454h1v1h-1zM620 431h1v1h-1zM620 409h1v1h-1zM620 386h1v1h-1zM620 363h1v1h-1zM620 341h1v1h-1zM620 318h1v1h-1zM620 295h1v1h-1zM620 272h1v1h-1zM620 250h1v1h-1zM620 227h1v1h-1zM620 204h1v1h-1zM620 181h1v1h-1zM620 159h1v1h-1zM643 750h1v1h-1zM643 727h1v1h-1zM643 704h1v1h-1zM643 682h1v1h-1zM643 659h1v1h-1zM643 636h1v1h-1zM643 613h1v1h-1zM643 591h1v1h-1zM643 568h1v1h-1zM643 545h1v1h-1zM643 522h1v1h-1zM643 500h1v1h-1zM643 477h1v1h-1zM643 454h1v1h-1zM643 431h1v1h-1zM643 409h1v1h-1zM643 386h1v1h-1zM643 363h1v1h-1zM643 341h1v1h-1zM643 318h1v1h-1zM643 295h1v1h-1zM643 272h1v1h-1zM643 250h1v1h-1zM643 227h1v1h-1zM643 204h1v1h-1zM643 181h1v1h-1zM643 159h1v1h-1zM665 750h1v1h-1zM665 727h1v1h-1zM665 704h1v1h-1zM665 682h1v1h-1zM665 659h1v1h-1zM665 636h1v1h-1zM665 613h1v1h-1zM665 591h1v1h-1zM665 568h1v1h-1zM665 545h1v1h-1zM665 522h1v1h-1zM665 500h1v1h-1zM665 477h1v1h-1zM665 454h1v1h-1zM665 431h1v1h-1zM665 409h1v1h-1zM665 386h1v1h-1zM665 363h1v1h-1zM665 341h1v1h-1zM665 318h1v1h-1zM665 295h1v1h-1zM665 272h1v1h-1zM665 250h1v1h-1zM665 227h1v1h-1zM665 204h1v1h-1zM665 181h1v1h-1zM665 159h1v1h-1zM688 750h1v1h-1zM688 727h1v1h-1zM688 704h1v1h-1zM688 682h1v1h-1zM688 659h1v1h-1zM688 636h1v1h-1zM688 613h1v1h-1zM688 591h1v1h-1zM688 568h1v1h-1zM688 545h1v1h-1zM688 522h1v1h-1zM688 500h1v1h-1zM688 477h1v1h-1zM688 454h1v1h-1zM688 431h1v1h-1zM688 409h1v1h-1zM688 386h1v1h-1zM688 363h1v1h-1zM688 341h1v1h-1zM688 318h1v1h-1zM688 295h1v1h-1zM688 272h1v1h-1zM688 250h1v1h-1zM688 227h1v1h-1zM688 204h1v1h-1zM688 181h1v1h-1zM688 159h1v1h-1zM711 750h1v1h-1zM711 727h1v1h-1zM711 704h1v1h-1zM711 682h1v1h-1zM711 659h1v1h-1zM711 636h1v1h-1zM711 613h1v1h-1zM711 591h1v1h-1zM711 568h1v1h-1zM711 545h1v1h-1zM711 522h1v1h-1zM711 500h1v1h-1zM711 477h1v1h-1zM711 454h1v1h-1zM711 431h1v1h-1zM711 409h1v1h-1zM711 386h1v1h-1zM711 363h1v1h-1zM711 341h1v1h-1zM711 318h1v1h-1zM711 295h1v1h-1zM711 272h1v1h-1zM711 250h1v1h-1zM711 227h1v1h-1zM711 204h1v1h-1zM711 181h1v1h-1zM711 159h1v1h-1zM734 750h1v1h-1zM734 727h1v1h-1zM734 704h1v1h-1zM734 682h1v1h-1zM734 659h1v1h-1zM734 636h1v1h-1zM734 613h1v1h-1zM734 591h1v1h-1zM734 568h1v1h-1zM734 545h1v1h-1zM734 522h1v1h-1zM734 500h1v1h-1zM734 477h1v1h-1zM734 454h1v1h-1zM734 431h1v1h-1zM734 409h1v1h-1zM734 386h1v1h-1zM734 363h1v1h-1zM734 341h1v1h-1zM734 318h1v1h-1zM734 295h1v1h-1zM734 272h1v1h-1zM734 250h1v1h-1zM734 227h1v1h-1zM734 204h1v1h-1zM734 181h1v1h-1zM734 159h1v1h-1zM756 750h1v1h-1zM756 727h1v1h-1zM756 704h1v1h-1zM756 682h1v1h-1zM756 659h1v1h-1zM756 636h1v1h-1zM756 613h1v1h-1zM756 591h1v1h-1zM756 568h1v1h-1zM756 545h1v1h-1zM756 522h1v1h-1zM756 500h1v1h-1zM756 477h1v1h-1zM756 454h1v1h-1zM756 431h1v1h-1zM756 409h1v1h-1zM756 386h1v1h-1zM756 363h1v1h-1zM756 341h1v1h-1zM756 318h1v1h-1zM756 295h1v1h-1zM756 272h1v1h-1zM756 250h1v1h-1zM756 227h1v1h-1zM756 204h1v1h-1zM756 181h1v1h-1zM756 159h1v1h-1zM779 750h1v1h-1zM779 727h1v1h-1zM779 704h1v1h-1zM779 682h1v1h-1zM779 659h1v1h-1zM779 636h1v1h-1zM779 613h1v1h-1zM779 591h1v1h-1zM779 568h1v1h-1zM779 545h1v1h-1zM779 522h1v1h-1zM779 500h1v1h-1zM779 477h1v1h-1zM779 454h1v1h-1zM779 431h1v1h-1zM779 409h1v1h-1zM779 386h1v1h-1zM779 363h1v1h-1zM779 341h1v1h-1zM779 318h1v1h-1zM779 295h1v1h-1zM779 272h1v1h-1zM779 250h1v1h-1zM779 227h1v1h-1zM779 204h1v1h-1zM779 181h1v1h-1zM779 159h1v1h-1zM802 750h1v1h-1zM802 727h1v1h-1zM802 704h1v1h-1zM802 682h1v1h-1zM802 659h1v1h-1zM802 636h1v1h-1zM802 613h1v1h-1zM802 591h1v1h-1zM802 568h1v1h-1zM802 545h1v1h-1zM802 522h1v1h-1zM802 500h1v1h-1zM802 477h1v1h-1zM802 454h1v1h-1zM802 431h1v1h-1zM802 409h1v1h-1zM802 386h1v1h-1zM802 363h1v1h-1zM802 341h1v1h-1zM802 318h1v1h-1zM802 295h1v1h-1zM802 272h1v1h-1zM802 250h1v1h-1zM802 227h1v1h-1zM802 204h1v1h-1zM802 181h1v1h-1zM802 159h1v1h-1zM824 750h1v1h-1zM824 727h1v1h-1zM824 704h1v1h-1zM824 682h1v1h-1zM824 659h1v1h-1zM824 636h1v1h-1zM824 613h1v1h-1zM824 591h1v1h-1zM824 568h1v1h-1zM824 545h1v1h-1zM824 522h1v1h-1zM824 500h1v1h-1zM824 477h1v1h-1zM824 454h1v1h-1zM824 431h1v1h-1zM824 409h1v1h-1zM824 386h1v1h-1zM824 363h1v1h-1zM824 341h1v1h-1zM824 318h1v1h-1zM824 295h1v1h-1zM824 272h1v1h-1zM824 250h1v1h-1zM824 227h1v1h-1zM824 204h1v1h-1zM824 181h1v1h-1zM824 159h1v1h-1zM847 750h1v1h-1zM847 727h1v1h-1zM847 704h1v1h-1zM847 682h1v1h-1zM847 659h1v1h-1zM847 636h1v1h-1zM847 613h1v1h-1zM847 591h1v1h-1zM847 568h1v1h-1zM847 545h1v1h-1zM847 522h1v1h-1zM847 500h1v1h-1zM847 477h1v1h-1zM847 454h1v1h-1zM847 431h1v1h-1zM847 409h1v1h-1zM847 386h1v1h-1zM847 363h1v1h-1zM847 341h1v1h-1zM847 318h1v1h-1zM847 295h1v1h-1zM847 272h1v1h-1zM847 250h1v1h-1zM847 227h1v1h-1zM847 204h1v1h-1zM847 181h1v1h-1zM847 159h1v1h-1zM870 750h1v1h-1zM870 727h1v1h-1zM870 704h1v1h-1zM870 682h1v1h-1zM870 659h1v1h-1zM870 636h1v1h-1zM870 613h1v1h-1zM870 591h1v1h-1zM870 568h1v1h-1zM870 545h1v1h-1zM870 522h1v1h-1zM870 500h1v1h-1zM870 477h1v1h-1zM870 454h1v1h-1zM870 431h1v1h-1zM870 409h1v1h-1zM870 386h1v1h-1zM870 363h1v1h-1zM870 341h1v1h-1zM870 318h1v1h-1zM870 295h1v1h-1zM870 272h1v1h-1zM870 250h1v1h-1zM870 227h1v1h-1zM870 204h1v1h-1zM870 181h1v1h-1zM870 159h1v1h-1zM893 750h1v1h-1zM893 727h1v1h-1zM893 704h1v1h-1zM893 682h1v1h-1zM893 659h1v1h-1zM893 636h1v1h-1zM893 613h1v1h-1zM893 591h1v1h-1zM893 568h1v1h-1zM893 545h1v1h-1zM893 522h1v1h-1zM893 500h1v1h-1zM893 477h1v1h-1zM893 454h1v1h-1zM893 431h1v1h-1zM893 409h1v1h-1zM893 386h1v1h-1zM893 363h1v1h-1zM893 341h1v1h-1zM893 318h1v1h-1zM893 295h1v1h-1zM893 272h1v1h-1zM893 250h1v1h-1zM893 227h1v1h-1zM893 204h1v1h-1zM893 181h1v1h-1zM893 159h1v1h-1zM915 750h1v1h-1zM915 727h1v1h-1zM915 704h1v1h-1zM915 682h1v1h-1zM915 659h1v1h-1zM915 636h1v1h-1zM915 613h1v1h-1zM915 591h1v1h-1zM915 568h1v1h-1zM915 545h1v1h-1zM915 522h1v1h-1zM915 500h1v1h-1zM915 477h1v1h-1zM915 454h1v1h-1zM915 431h1v1h-1zM915 409h1v1h-1zM915 386h1v1h-1zM915 363h1v1h-1zM915 341h1v1h-1zM915 318h1v1h-1zM915 295h1v1h-1zM915 272h1v1h-1zM915 250h1v1h-1zM915 227h1v1h-1zM915 204h1v1h-1zM915 181h1v1h-1zM915 159h1v1h-1zM938 750h1v1h-1zM938 727h1v1h-1zM938 704h1v1h-1zM938 682h1v1h-1zM938 659h1v1h-1zM938 636h1v1h-1zM938 613h1v1h-1zM938 591h1v1h-1zM938 568h1v1h-1zM938 545h1v1h-1zM938 522h1v1h-1zM938 500h1v1h-1zM938 477h1v1h-1zM938 454h1v1h-1zM938 431h1v1h-1zM938 409h1v1h-1zM938 386h1v1h-1zM938 363h1v1h-1zM938 341h1v1h-1zM938 318h1v1h-1zM938 295h1v1h-1zM938 272h1v1h-1zM938 250h1v1h-1zM938 227h1v1h-1zM938 204h1v1h-1zM938 181h1v1h-1zM938 159h1v1h-1zM961 750h1v1h-1zM961 727h1v1h-1zM961 704h1v1h-1zM961 682h1v1h-1zM961 659h1v1h-1zM961 636h1v1h-1zM961 613h1v1h-1zM961 591h1v1h-1zM961 568h1v1h-1zM961 545h1v1h-1zM961 522h1v1h-1zM961 500h1v1h-1zM961 477h1v1h-1zM961 454h1v1h-1zM961 431h1v1h-1zM961 409h1v1h-1zM961 386h1v1h-1zM961 363h1v1h-1zM961 341h1v1h-1zM961 318h1v1h-1zM961 295h1v1h-1zM961 272h1v1h-1zM961 250h1v1h-1zM961 227h1v1h-1zM961 204h1v1h-1zM961 181h1v1h-1zM961 159h1v1h-1zM984 750h1v1h-1zM984 727h1v1h-1zM984 704h1v1h-1zM984 682h1v1h-1zM984 659h1v1h-1zM984 636h1v1h-1zM984 613h1v1h-1zM984 591h1v1h-1zM984 568h1v1h-1zM984 545h1v1h-1zM984 522h1v1h-1zM984 500h1v1h-1zM984 477h1v1h-1zM984 454h1v1h-1zM984 431h1v1h-1zM984 409h1v1h-1zM984 386h1v1h-1zM984 363h1v1h-1zM984 341h1v1h-1zM984 318h1v1h-1zM984 295h1v1h-1zM984 272h1v1h-1zM984 250h1v1h-1zM984 227h1v1h-1zM984 204h1v1h-1zM984 181h1v1h-1zM984 159h1v1h-1zM1006 750h1v1h-1zM1006 727h1v1h-1zM1006 704h1v1h-1zM1006 682h1v1h-1zM1006 659h1v1h-1zM1006 636h1v1h-1zM1006 613h1v1h-1zM1006 591h1v1h-1zM1006 568h1v1h-1zM1006 545h1v1h-1zM1006 522h1v1h-1zM1006 500h1v1h-1zM1006 477h1v1h-1zM1006 454h1v1h-1zM1006 431h1v1h-1zM1006 409h1v1h-1zM1006 386h1v1h-1zM1006 363h1v1h-1zM1006 341h1v1h-1zM1006 318h1v1h-1zM1006 295h1v1h-1zM1006 272h1v1h-1zM1006 250h1v1h-1zM1006 227h1v1h-1zM1006 204h1v1h-1zM1006 181h1v1h-1zM1006 159h1v1h-1zM1029 750h1v1h-1zM1029 727h1v1h-1zM1029 704h1v1h-1zM1029 682h1v1h-1zM1029 659h1v1h-1zM1029 636h1v1h-1zM1029 613h1v1h-1zM1029 591h1v1h-1zM1029 568h1v1h-1zM1029 545h1v1h-1zM1029 522h1v1h-1zM1029 500h1v1h-1zM1029 477h1v1h-1zM1029 454h1v1h-1zM1029 431h1v1h-1zM1029 409h1v1h-1zM1029 386h1v1h-1zM1029 363h1v1h-1zM1029 341h1v1h-1zM1029 318h1v1h-1zM1029 295h1v1h-1zM1029 272h1v1h-1zM1029 250h1v1h-1zM1029 227h1v1h-1zM1029 204h1v1h-1zM1029 181h1v1h-1zM1029 159h1v1h-1zM1052 750h1v1h-1zM1052 727h1v1h-1zM1052 704h1v1h-1zM1052 682h1v1h-1zM1052 659h1v1h-1zM1052 636h1v1h-1zM1052 613h1v1h-1zM1052 591h1v1h-1zM1052 568h1v1h-1zM1052 545h1v1h-1zM1052 522h1v1h-1zM1052 500h1v1h-1zM1052 477h1v1h-1zM1052 454h1v1h-1zM1052 431h1v1h-1zM1052 409h1v1h-1zM1052 386h1v1h-1zM1052 363h1v1h-1zM1052 341h1v1h-1zM1052 318h1v1h-1zM1052 295h1v1h-1zM1052 272h1v1h-1zM1052 250h1v1h-1zM1052 227h1v1h-1zM1052 204h1v1h-1zM1052 181h1v1h-1zM1052 159h1v1h-1zM1075 750h1v1h-1zM1075 727h1v1h-1zM1075 704h1v1h-1zM1075 682h1v1h-1zM1075 659h1v1h-1zM1075 636h1v1h-1zM1075 613h1v1h-1zM1075 591h1v1h-1zM1075 568h1v1h-1zM1075 545h1v1h-1zM1075 522h1v1h-1zM1075 500h1v1h-1zM1075 477h1v1h-1zM1075 454h1v1h-1zM1075 431h1v1h-1zM1075 409h1v1h-1zM1075 386h1v1h-1zM1075 363h1v1h-1zM1075 341h1v1h-1zM1075 318h1v1h-1zM1075 295h1v1h-1zM1075 272h1v1h-1zM1075 250h1v1h-1zM1075 227h1v1h-1zM1075 204h1v1h-1zM1075 181h1v1h-1zM1075 159h1v1h-1zM1097 750h1v1h-1zM1097 727h1v1h-1zM1097 704h1v1h-1zM1097 682h1v1h-1zM1097 659h1v1h-1zM1097 636h1v1h-1zM1097 613h1v1h-1zM1097 591h1v1h-1zM1097 568h1v1h-1zM1097 545h1v1h-1zM1097 522h1v1h-1zM1097 500h1v1h-1zM1097 477h1v1h-1zM1097 454h1v1h-1zM1097 431h1v1h-1zM1097 409h1v1h-1zM1097 386h1v1h-1zM1097 363h1v1h-1zM1097 341h1v1h-1zM1097 318h1v1h-1zM1097 295h1v1h-1zM1097 272h1v1h-1zM1097 250h1v1h-1zM1097 227h1v1h-1zM1097 204h1v1h-1zM1097 181h1v1h-1zM1097 159h1v1h-1zM1120 750h1v1h-1zM1120 727h1v1h-1zM1120 704h1v1h-1zM1120 682h1v1h-1zM1120 659h1v1h-1zM1120 636h1v1h-1zM1120 613h1v1h-1zM1120 591h1v1h-1zM1120 568h1v1h-1zM1120 545h1v1h-1zM1120 522h1v1h-1zM1120 500h1v1h-1zM1120 477h1v1h-1zM1120 454h1v1h-1zM1120 431h1v1h-1zM1120 409h1v1h-1zM1120 386h1v1h-1zM1120 363h1v1h-1zM1120 341h1v1h-1zM1120 318h1v1h-1zM1120 295h1v1h-1zM1120 272h1v1h-1zM1120 250h1v1h-1zM1120 227h1v1h-1zM1120 204h1v1h-1zM1120 181h1v1h-1zM1120 159h1v1h-1z" fill="#e2e2e2"/>
<line x1="279.4" y1="155" x2="279.4" y2="732" stroke="#d7d7d7" stroke-width="1"/>
<line x1="506.7" y1="155" x2="506.7" y2="732" stroke="#d7d7d7" stroke-width="1"/>
<line x1="734.1" y1="155" x2="734.1" y2="732" stroke="#d7d7d7" stroke-width="1"/>
<line x1="961.4" y1="155" x2="961.4" y2="732" stroke="#d7d7d7" stroke-width="1"/>
<line x1="1188.7" y1="155" x2="1188.7" y2="732" stroke="#d7d7d7" stroke-width="1"/>
<line x1="52.1" y1="155" x2="52.1" y2="732" stroke="#d7d7d7" stroke-width="1"/>
<line x1="95" y1="682.0" x2="1139" y2="682.0" stroke="#d7d7d7" stroke-width="1"/>
<line x1="95" y1="454.7" x2="1139" y2="454.7" stroke="#d7d7d7" stroke-width="1"/>
<line x1="95" y1="227.3" x2="1139" y2="227.3" stroke="#d7d7d7" stroke-width="1"/>
<rect x="955" y="214.5" width="9" height="477" fill="#848484"/>
<rect x="289" y="682.5" width="675" height="9" fill="#848484"/>
<rect x="279.7" y="205.2" width="674.6" height="476.8" fill="#fff" stroke="#c2c2c2" stroke-width="1.4"/>
<line x1="506.7" y1="206" x2="506.7" y2="681" stroke="#f0f0f0" stroke-width="1"/>
<line x1="734.1" y1="206" x2="734.1" y2="681" stroke="#f0f0f0" stroke-width="1"/>
<line x1="281" y1="454.7" x2="953" y2="454.7" stroke="#f0f0f0" stroke-width="1"/>
<line x1="281" y1="227.3" x2="953" y2="227.3" stroke="#f0f0f0" stroke-width="1"/>
<line x1="279.4" y1="206" x2="279.4" y2="732" stroke="#dcdcdc" stroke-width="1"/>
<rect x="302.8" y="228.2" width="628.6" height="430.5" fill="none" stroke="#5c5ce0" stroke-width="2.5"/>
<rect x="302.8" y="228.2" width="628.6" height="430.5" fill="none" stroke="#3c3c84" stroke-width="1.4"/>
<rect x="303.2" y="221.3" width="316.2" height="330.2" stroke="#f050f0" stroke-width="1" fill="none" stroke-dasharray="5.5 2.2 1 2.2"/>
<path d="M965.4 155V375.3H1139" stroke="#f050f0" stroke-width="1" fill="none" stroke-dasharray="5.5 2.2 1 2.2"/>
<path d="M437.4 311.5V290.9A14.65 14.65 0 0 1 466.7 290.9V311.5" stroke="#2a2a2a" stroke-width="0.9" fill="none"/>
<circle cx="452.1" cy="290.6" r="3.7" stroke="#2a2a2a" stroke-width="0.9" fill="none"/>
<path d="M449.6 300.9L326.2 401.1L328.5 403.6L452.1 304.8Z" stroke="#2a2a2a" stroke-width="0.9" fill="none"/>
<path d="M454.6 300.9L578.0 401.1L575.7 403.6L452.1 304.8Z" stroke="#2a2a2a" stroke-width="0.9" fill="none"/>
<path d="M390.6 347.9L408.6 333.4M513.6 347.9L495.6 333.4" stroke="#777" stroke-width="0.7"/><path d="M391.2 349L409.2 334.5M513 349L495 334.5" stroke="#bbb" stroke-width="0.6"/>
<path d="M361.2 377.4L380.3 486.8M543.0 377.4L523.9 486.8" stroke="#2a2a2a" stroke-width="0.9" fill="none"/>
<circle cx="452.1" cy="395.4" r="32" stroke="#2a2a2a" stroke-width="0.9" fill="none"/>
<path d="M455.8 374.2L450.1 373.8C447 372.2 443 371.5 440.4 372.9C437.5 374.5 436.8 378 436.5 380.8C436 385 435.5 388.5 434.3 392.2C433.8 396 434.2 399 435.6 401C437.5 404 441 406.4 443.9 407.2L447.5 409L445.7 411.3L420.3 397.9" stroke="#2a2a2a" stroke-width="0.9" fill="none"/>
<path d="M455.8 374.2L453.6 376.9L451.4 378.2L451.7 383.4L454.5 385.2C457 387 459 389 460.6 391.3L467.6 403.6L476.4 415.9" stroke="#2a2a2a" stroke-width="0.9" fill="none"/>
<path d="M420.6 401.2L461.5 425.6" stroke="#2a2a2a" stroke-width="0.9" fill="none"/>
<path d="M449.2 411.6L451.8 410.5L453.6 413L452 415.2L449.6 414Z" stroke="#2a2a2a" stroke-width="0.9" fill="none"/>
<path d="M455.4 412.4L459.7 409.8L469.4 413.3L474.6 417.6L466.8 423.4L455.4 416.8Z" stroke="#2a2a2a" stroke-width="0.9" fill="none"/>
<rect x="327" y="486.8" width="250.3" height="14.5" stroke="#2a2a2a" stroke-width="0.9" fill="none"/>
<line x1="327" y1="498.5" x2="577.3" y2="498.5" stroke="#222" stroke-width="1.1"/>
<path d="M382.3 501.5L383.5 510.5Q384 513.4 387 513.4H517Q520 513.4 520.5 510.5L521.5 501.5" stroke="#2a2a2a" stroke-width="0.9" fill="none"/>
<line x1="452.1" y1="245" x2="452.1" y2="530" stroke="#f07070" stroke-width="1" stroke-dasharray="10.7 4.6 1 5" stroke-dashoffset="-7" opacity="0.85"/>
<line x1="455" y1="276.4" x2="615" y2="276.4" stroke="#7cc4c4" stroke-width="1"/>
<line x1="520" y1="513.4" x2="614.8" y2="513.4" stroke="#7cc4c4" stroke-width="1"/>
<line x1="611.2" y1="276.4" x2="611.2" y2="513.4" stroke="#7cc4c4" stroke-width="1"/>
<path d="M611.2 276.4L609.2 283L613.2 283Z" fill="#1a7f7f"/>
<path d="M611.2 513.4L609.2 506.8L613.2 506.8Z" fill="#1a7f7f"/>
<text transform="translate(609.8,394.5) rotate(-90)" font-size="10" text-anchor="middle" fill="#3a9a9a">209</text>
<line x1="327.3" y1="503" x2="327.3" y2="551.5" stroke="#7cc4c4" stroke-width="1"/>
<line x1="577.3" y1="503" x2="577.3" y2="551.5" stroke="#7cc4c4" stroke-width="1"/>
<line x1="327.3" y1="551" x2="577.3" y2="551" stroke="#7cc4c4" stroke-width="1"/>
<path d="M327.3 551L334 549.3L334 552.5Z" fill="#1a7f7f"/>
<path d="M577.3 551L570.6 549.3L570.6 552.5Z" fill="#1a7f7f"/>
<text x="452.1" y="551" font-size="10" text-anchor="middle" fill="#3a9a9a">220</text>
<path d="M545.6 577.3H931.6M545.6 591.1H931.6M545.6 613.3H931.6M715.7 636.7H931.6M545.6 577.3V659M579.6 577.3V591.1M618.4 577.3V613.3M817.8 577.3V613.3M674.4 591.1V613.3M761.4 591.1V613.3M886.4 591.1V613.3M886.4 636.7V659M715.7 613.3V659M852.3 636.7V659" stroke="#444" stroke-width="0.9" fill="none"/>
<text x="548.5" y="586" font-size="5.4" fill="#111" stroke="#111" stroke-width="0.15">Item ref</text>
<text x="583.5" y="586" font-size="5.4" fill="#111" stroke="#111" stroke-width="0.15">Quantity</text>
<text x="622" y="586" font-size="5.4" fill="#111" stroke="#111" stroke-width="0.15">Title/Name, destination, material, dimension etc</text>
<text x="822.5" y="586.2" font-size="5.4" fill="#111" stroke="#111" stroke-width="0.15">Article No./Reference</text>
<text x="548.5" y="598.5" font-size="5.4" fill="#111" stroke="#111" stroke-width="0.15">Designed by</text>
<text x="621.5" y="598.5" font-size="5.4" fill="#111" stroke="#111" stroke-width="0.15">Checked by</text>
<text x="689" y="598.5" font-size="5.4" fill="#111" stroke="#111" stroke-width="0.15">Approved by - date</text>
<text x="768" y="598.8" font-size="5.4" fill="#111" stroke="#111" stroke-width="0.15">Filename</text>
<text x="821.5" y="599" font-size="5.4" fill="#111" stroke="#111" stroke-width="0.15">Date</text>
<text x="890" y="599" font-size="5.4" fill="#111" stroke="#111" stroke-width="0.15">Scale</text>
<text x="856" y="644.5" font-size="5.4" fill="#111" stroke="#111" stroke-width="0.15">Edition</text>
<text x="892.5" y="644.7" font-size="5.4" fill="#111" stroke="#111" stroke-width="0.15">Sheet</text>
<text x="811" y="609" font-size="5.6" text-anchor="end" fill="#222">file.dxf</text>
<text x="879.6" y="609.6" font-size="10.6" text-anchor="end" fill="#111">01/01/2025</text>
<text x="925" y="609.6" font-size="10.6" text-anchor="end" fill="#111">1:2</text>
<text x="925" y="654.6" font-size="10.6" text-anchor="end" fill="#111">1/2</text>
<text x="722.8" y="631.8" font-size="16" fill="#111" letter-spacing="-0.1">Vogelhäuschen Teile</text>
<path d="M1118.5 171.3L1128 167.3M1035 219.6L1044.5 215.5M1020.4 227.7L1029.8 299.5" stroke="#303030" stroke-width="0.9" fill="none"/>
<path d="M1056.6 211.7V199.8Q1058 195 1063.7 195Q1070.5 197 1072.6 206.3L1070.8 220L1064.3 210.5Z" stroke="#303030" stroke-width="0.9" fill="none"/>
<path d="M1063.7 193.6Q1072 196 1074 206.5" stroke="#303030" stroke-width="0.9" fill="none"/>
<ellipse cx="1063.1" cy="205.7" rx="1.6" ry="2.2" transform="rotate(-20 1063.1 205.7)" stroke="#303030" stroke-width="0.9" fill="none"/>
<ellipse cx="1063.7" cy="262" rx="13" ry="20" transform="rotate(-22 1063.7 262)" stroke="#303030" stroke-width="0.9" fill="none"/>
<ellipse cx="1063.9" cy="262.3" rx="11.4" ry="18.4" transform="rotate(-22 1063.9 262.3)" stroke="#303030" stroke-width="0.9" fill="none"/>
<path d="M1056 252Q1058 246 1063 246.5L1065.5 252L1064.5 254.5L1068 268Q1071 273 1068 276L1062 272L1059 266Q1055 260 1056 252Z" stroke="#303030" stroke-width="0.9" fill="none"/>
<path d="M1050 258L1060 279M1052 262L1061 278" stroke="#303030" stroke-width="0.6"/>
<path d="M1085.5 240.5L1093.5 253.5M1087.5 239.5L1095 252" stroke="#303030" stroke-width="0.7"/>
<path d="M1105.5 286.5L1097.5 336M1107.5 286.5L1099.5 336" stroke="#303030" stroke-width="0.7"/>
<circle cx="1097.3" cy="250.4" r="4.8" fill="none" stroke="#f0c84a" stroke-width="0.9"/>
<text x="1105.2" y="268.6" font-size="14" fill="#f6c41c" stroke="#f6c41c" stroke-width="0.25">Raster</text>
<path d="M279.5 662V702M259 682.3H300" stroke="#e05050" stroke-width="1.1" opacity="0.85"/>
</g></svg>
<div class="a" style="left:1143px;top:313px;width:8px;height:265px;background:#7f7f7f;border-radius:4px"></div>
<div class="a" style="left:231px;top:736px;width:717px;height:8px;background:#7f7f7f;border-radius:4px"></div>
<div class="a" style="left:1083px;top:732px;width:70px;height:15px;background:#ececec"></div>
<div class="a" style="left:1103px;top:732px;width:50px;font-size:12.8px;line-height:16px;color:#111;text-align:right;white-space:nowrap">10 &lt; 100</div>
<div class="a" style="left:1139px;top:749px;width:1px;height:21px;background:#ececec"></div>
<div class="a" style="left:1142px;top:751px;width:8px;height:16px;background:#7f7f7f;border-radius:4px"></div>
<div class="a" style="left:77px;top:750px;font-size:13.2px;line-height:16px;color:#1414d0;font-style:italic;white-space:nowrap">Kommando: vt</div>
<div class="a" style="left:73px;top:778px;font-size:13.2px;line-height:16px;color:#111;white-space:nowrap">Position:</div>
<div class="a" style="left:128px;top:776px;width:999px;height:18px;background:#fff"></div>
<div class="a" style="left:1127px;top:773px;width:26px;height:25px;background:linear-gradient(#f6f6f6,#e8e8e8);border:1px solid #bdbdbd"></div>
<svg class="a" style="left:1132px;top:779px" width="16" height="12" viewBox="0 0 16 12"><rect x="1" y="1" width="14" height="10" fill="#fff" stroke="#222" stroke-width="1"/><rect x="1" y="1" width="14" height="2.6" fill="#111"/><rect x="12.5" y="1.6" width="1" height="1" fill="#fff"/></svg>
<div class="a" style="left:72px;top:108px;width:1081px;height:24px;background:#d5d5d5"></div>
<svg class="a" style="left:78px;top:115px" width="10" height="10" viewBox="0 0 10 10"><path d="M1 1L9 9M9 1L1 9" stroke="#6a6a6a" stroke-width="0.9"/></svg>
<svg class="a" style="left:95px;top:112px" width="15" height="15" viewBox="0 0 15 15"><circle cx="7" cy="7" r="6" fill="#eef2fa" stroke="#2b4a8c" stroke-width="1.8"/><path d="M4 7A3 3 0 0 1 10 7" stroke="#d05050" stroke-width="0.6" fill="none"/><path d="M7 7L12.5 13" stroke="#e8b020" stroke-width="2"/><path d="M11.8 12.3L13.5 14" stroke="#d06060" stroke-width="1.6"/></svg>
<div class="a" style="left:592px;top:113px;font-size:12px;line-height:15px;color:#111;white-space:nowrap">* birdhouse.dxf</div>

<div class="a" style="left:1155px;top:108px;width:300px;height:22px;background:linear-gradient(#ececec,#dadada);border-bottom:1px solid #c4c4c4"></div>
<svg class="a" style="left:1156px;top:110px" width="16" height="16" viewBox="0 0 16 16"><circle cx="8" cy="8" r="7.2" fill="#6e6e6e"/><path d="M5 5L11 11M11 5L5 11" stroke="#e8e8e8" stroke-width="1.8"/></svg>
<svg class="a" style="left:1174px;top:110px" width="16" height="16" viewBox="0 0 16 16"><circle cx="8" cy="8" r="7.2" fill="#6e6e6e"/><rect x="4.2" y="6.8" width="5.6" height="4.4" fill="none" stroke="#e8e8e8" stroke-width="1"/><path d="M6.2 6.8V4.8H11.8V9.2H9.8" fill="none" stroke="#e8e8e8" stroke-width="1"/></svg>
<div class="a" style="left:1297px;top:111px;font-size:11.8px;color:#2a2a2a;line-height:14px">Blockliste</div>
<div class="a" style="left:1155px;top:130px;width:300px;height:26px;background:#b4b4b4"></div>
<div class="a" style="left:1156px;top:131px;width:36px;height:24px;background:linear-gradient(#f7f7f7,#e9e9e9)"></div>
<div class="a" style="left:1194px;top:131px;width:35px;height:24px;background:linear-gradient(#f7f7f7,#e9e9e9)"></div>
<div class="a" style="left:1231px;top:131px;width:36px;height:24px;background:linear-gradient(#f7f7f7,#e9e9e9)"></div>
<div class="a" style="left:1269px;top:131px;width:35px;height:24px;background:linear-gradient(#f7f7f7,#e9e9e9)"></div>
<div class="a" style="left:1306px;top:131px;width:36px;height:24px;background:linear-gradient(#f7f7f7,#e9e9e9)"></div>
<div class="a" style="left:1344px;top:131px;width:35px;height:24px;background:linear-gradient(#f7f7f7,#e9e9e9)"></div>
<div class="a" style="left:1381px;top:131px;width:36px;height:24px;background:linear-gradient(#eeeeee,#e2e2e2)"></div>
<div class="a" style="left:1419px;top:131px;width:35px;height:24px;background:linear-gradient(#f7f7f7,#e9e9e9)"></div>
<svg class="a" style="left:1166px;top:138px" width="15" height="11" viewBox="0 0 15 11"><path d="M0.6 5.6C2.8 1.6 5.6 0.5 7.5 0.5S12.2 1.6 14.4 5.6C12.2 9.6 9.4 10.6 7.5 10.6S2.8 9.6 0.6 5.6Z" fill="#000"/><path d="M3.3 6C4.7 4 6.1 3.3 7.5 3.3S10.3 4 11.7 6C10.3 7.8 8.9 8.4 7.5 8.4S4.7 7.8 3.3 6Z" fill="#fff"/><path d="M4.9 5A2.6 2.6 0 0 0 10.1 5C10.1 3.6 9 3 7.5 3S4.9 3.6 4.9 5Z" fill="#000"/><path d="M1.5 3.5L3 2.8M13.5 3.5L12 2.8M3 9.5L4.5 8.8" stroke="#000" stroke-width="1"/><path d="M6.3 4.2Q7 3.3 8 3.6" stroke="#fff" stroke-width="0.6" fill="none"/></svg>
<svg class="a" style="left:1203px;top:138px" width="15" height="11" viewBox="0 0 15 11"><path d="M0.6 5.6C2.8 1.6 5.6 0.5 7.5 0.5S12.2 1.6 14.4 5.6C12.2 9.6 9.4 10.6 7.5 10.6S2.8 9.6 0.6 5.6Z" fill="#a8a8a8"/><path d="M3.3 6C4.7 4 6.1 3.3 7.5 3.3S10.3 4 11.7 6C10.3 7.8 8.9 8.4 7.5 8.4S4.7 7.8 3.3 6Z" fill="#fff"/><path d="M4.9 5A2.6 2.6 0 0 0 10.1 5C10.1 3.6 9 3 7.5 3S4.9 3.6 4.9 5Z" fill="#a8a8a8"/><path d="M1.5 3.5L3 2.8M13.5 3.5L12 2.8M3 9.5L4.5 8.8" stroke="#a8a8a8" stroke-width="1"/><path d="M6.3 4.2Q7 3.3 8 3.6" stroke="#fff" stroke-width="0.6" fill="none"/></svg>
<svg class="a" style="left:1241px;top:136px" width="14" height="14" viewBox="0 0 14 14"><path d="M5 0.5H9V5H13.5V9H9V13.5H5V9H0.5V5H5Z" fill="#e00000" stroke="#900" stroke-width="0.3"/></svg>
<svg class="a" style="left:1279px;top:140px" width="14" height="6" viewBox="0 0 14 6"><rect x="0.5" y="1" width="13" height="4" fill="#e00000"/></svg>
<div class="a" style="left:1316px;top:136px;font-size:11.5px;color:#111;line-height:16px">a<span style="display:inline-block;width:1px;height:12px;background:#111;margin:0 1px;vertical-align:-2px"></span>b</div>
<svg class="a" style="left:1353px;top:135px" width="14" height="14" viewBox="0 0 14 14"><path d="M1 13L2 9.6L10.6 1L13 3.4L4.4 12Z" fill="#e0b050" stroke="#8a6a30" stroke-width="0.6"/><path d="M10.6 1L13 3.4L11.9 4.5L9.5 2.1Z" fill="#e05060"/><path d="M1 13L2 9.6L4.4 12Z" fill="#e8d8b0"/><path d="M1 13L1.5 11.3L2.7 12.5Z" fill="#333"/></svg>
<svg class="a" style="left:1392px;top:135px" width="14" height="16" viewBox="0 0 14 16"><rect x="0.5" y="0.5" width="13" height="15" fill="#e6e6e6" stroke="#d4d4d4" stroke-width="0.5"/><path d="M3 2.5H6Q9 2.5 9 5.5V10.5H11.5L7.5 14.5L3.5 10.5H6V5.5Q6 4.5 5 4.5H3Z" fill="#90b0f0"/></svg>
<svg class="a" style="left:1430px;top:137px" width="12" height="12" viewBox="0 0 12 12"><rect x="0.8" y="0.8" width="10.4" height="10.4" rx="1" fill="#e88060" stroke="#dc4a30" stroke-width="1.2"/><path d="M3.6 3.6L8.4 8.4M8.4 3.6L3.6 8.4" stroke="#fff" stroke-width="1.6"/></svg>
<div class="a" style="left:1155px;top:155px;width:300px;height:168px;background:#fff;border-top:1px solid #c4c4c4;border-bottom:2px solid #b8b8b8"></div>
<div class="a" style="left:1156px;top:197px;width:298px;height:20px;background:#d4d4d4"></div>
<svg class="a" style="left:1161px;top:162px" width="15" height="11" viewBox="0 0 15 11"><path d="M0.6 5.6C2.8 1.6 5.6 0.5 7.5 0.5S12.2 1.6 14.4 5.6C12.2 9.6 9.4 10.6 7.5 10.6S2.8 9.6 0.6 5.6Z" fill="#000"/><path d="M3.3 6C4.7 4 6.1 3.3 7.5 3.3S10.3 4 11.7 6C10.3 7.8 8.9 8.4 7.5 8.4S4.7 7.8 3.3 6Z" fill="#fff"/><path d="M4.9 5A2.6 2.6 0 0 0 10.1 5C10.1 3.6 9 3 7.5 3S4.9 3.6 4.9 5Z" fill="#000"/><path d="M1.5 3.5L3 2.8M13.5 3.5L12 2.8M3 9.5L4.5 8.8" stroke="#000" stroke-width="1"/><path d="M6.3 4.2Q7 3.3 8 3.6" stroke="#fff" stroke-width="0.6" fill="none"/></svg>
<div class="a" style="left:1205px;top:158.8px;font-size:13.1px;letter-spacing:0.15px;color:#111;line-height:16px;white-space:nowrap">Model (*Model_Space)</div>
<svg class="a" style="left:1161px;top:182px" width="15" height="11" viewBox="0 0 15 11"><path d="M0.6 5.6C2.8 1.6 5.6 0.5 7.5 0.5S12.2 1.6 14.4 5.6C12.2 9.6 9.4 10.6 7.5 10.6S2.8 9.6 0.6 5.6Z" fill="#000"/><path d="M3.3 6C4.7 4 6.1 3.3 7.5 3.3S10.3 4 11.7 6C10.3 7.8 8.9 8.4 7.5 8.4S4.7 7.8 3.3 6Z" fill="#fff"/><path d="M4.9 5A2.6 2.6 0 0 0 10.1 5C10.1 3.6 9 3 7.5 3S4.9 3.6 4.9 5Z" fill="#000"/><path d="M1.5 3.5L3 2.8M13.5 3.5L12 2.8M3 9.5L4.5 8.8" stroke="#000" stroke-width="1"/><path d="M6.3 4.2Q7 3.3 8 3.6" stroke="#fff" stroke-width="0.6" fill="none"/></svg>
<div class="a" style="left:1205px;top:178.6px;font-size:13.1px;letter-spacing:0.15px;color:#111;line-height:16px;white-space:nowrap">Layout1 (*Paper_Space)</div>
<svg class="a" style="left:1161px;top:201px" width="15" height="11" viewBox="0 0 15 11"><path d="M0.6 5.6C2.8 1.6 5.6 0.5 7.5 0.5S12.2 1.6 14.4 5.6C12.2 9.6 9.4 10.6 7.5 10.6S2.8 9.6 0.6 5.6Z" fill="#3a4858"/><path d="M3.3 6C4.7 4 6.1 3.3 7.5 3.3S10.3 4 11.7 6C10.3 7.8 8.9 8.4 7.5 8.4S4.7 7.8 3.3 6Z" fill="#d4d4d4"/><path d="M4.9 5A2.6 2.6 0 0 0 10.1 5C10.1 3.6 9 3 7.5 3S4.9 3.6 4.9 5Z" fill="#3a4858"/><path d="M1.5 3.5L3 2.8M13.5 3.5L12 2.8M3 9.5L4.5 8.8" stroke="#3a4858" stroke-width="1"/><path d="M6.3 4.2Q7 3.3 8 3.6" stroke="#d4d4d4" stroke-width="0.6" fill="none"/></svg>
<div class="a" style="left:1205px;top:198.3px;font-size:13.1px;letter-spacing:0.15px;color:#111;line-height:16px;white-space:nowrap">Layout2 (*Paper_Space0)</div>
<svg class="a" style="left:1161px;top:221px" width="15" height="11" viewBox="0 0 15 11"><path d="M0.6 5.6C2.8 1.6 5.6 0.5 7.5 0.5S12.2 1.6 14.4 5.6C12.2 9.6 9.4 10.6 7.5 10.6S2.8 9.6 0.6 5.6Z" fill="#000"/><path d="M3.3 6C4.7 4 6.1 3.3 7.5 3.3S10.3 4 11.7 6C10.3 7.8 8.9 8.4 7.5 8.4S4.7 7.8 3.3 6Z" fill="#fff"/><path d="M4.9 5A2.6 2.6 0 0 0 10.1 5C10.1 3.6 9 3 7.5 3S4.9 3.6 4.9 5Z" fill="#000"/><path d="M1.5 3.5L3 2.8M13.5 3.5L12 2.8M3 9.5L4.5 8.8" stroke="#000" stroke-width="1"/><path d="M6.3 4.2Q7 3.3 8 3.6" stroke="#fff" stroke-width="0.6" fill="none"/></svg>
<div class="a" style="left:1205px;top:218.1px;font-size:13.1px;letter-spacing:0.15px;color:#111;line-height:16px;white-space:nowrap">Rahmen</div>
<svg class="a" style="left:1184px;top:200px" width="14" height="14" viewBox="0 0 14 14"><path d="M1 13L2 9.6L10.6 1L13 3.4L4.4 12Z" fill="#e0b050" stroke="#8a6a30" stroke-width="0.6"/><path d="M10.6 1L13 3.4L11.9 4.5L9.5 2.1Z" fill="#e05060"/><path d="M1 13L2 9.6L4.4 12Z" fill="#e8d8b0"/><path d="M1 13L1.5 11.3L2.7 12.5Z" fill="#333"/></svg>
<div class="a" style="left:1155px;top:324px;width:300px;height:23px;background:linear-gradient(#ececec,#d8d8d8);border-bottom:1px solid #c0c0c0"></div>
<svg class="a" style="left:1156px;top:326px" width="16" height="16" viewBox="0 0 16 16"><circle cx="8" cy="8" r="7.2" fill="#6e6e6e"/><path d="M5 5L11 11M11 5L5 11" stroke="#e8e8e8" stroke-width="1.8"/></svg>
<svg class="a" style="left:1174px;top:326px" width="16" height="16" viewBox="0 0 16 16"><circle cx="8" cy="8" r="7.2" fill="#6e6e6e"/><rect x="4.2" y="6.8" width="5.6" height="4.4" fill="none" stroke="#e8e8e8" stroke-width="1"/><path d="M6.2 6.8V4.8H11.8V9.2H9.8" fill="none" stroke="#e8e8e8" stroke-width="1"/></svg>
<div class="a" style="left:1297px;top:328px;font-size:11.8px;color:#2a2a2a;line-height:14px">Layerliste</div>
<div class="a" style="left:1155px;top:347px;width:300px;height:26px;background:#b4b4b4"></div>
<div class="a" style="left:1156px;top:348px;width:58px;height:24px;background:linear-gradient(#f7f7f7,#e9e9e9)"></div>
<div class="a" style="left:1216px;top:348px;width:58px;height:24px;background:linear-gradient(#f7f7f7,#e9e9e9)"></div>
<div class="a" style="left:1276px;top:348px;width:58px;height:24px;background:linear-gradient(#f7f7f7,#e9e9e9)"></div>
<div class="a" style="left:1336px;top:348px;width:58px;height:24px;background:linear-gradient(#f7f7f7,#e9e9e9)"></div>
<div class="a" style="left:1396px;top:348px;width:58px;height:24px;background:linear-gradient(#f7f7f7,#e9e9e9)"></div>
<svg class="a" style="left:1178px;top:354px" width="15" height="11" viewBox="0 0 15 11"><path d="M0.6 5.6C2.8 1.6 5.6 0.5 7.5 0.5S12.2 1.6 14.4 5.6C12.2 9.6 9.4 10.6 7.5 10.6S2.8 9.6 0.6 5.6Z" fill="#000"/><path d="M3.3 6C4.7 4 6.1 3.3 7.5 3.3S10.3 4 11.7 6C10.3 7.8 8.9 8.4 7.5 8.4S4.7 7.8 3.3 6Z" fill="#fff"/><path d="M4.9 5A2.6 2.6 0 0 0 10.1 5C10.1 3.6 9 3 7.5 3S4.9 3.6 4.9 5Z" fill="#000"/><path d="M1.5 3.5L3 2.8M13.5 3.5L12 2.8M3 9.5L4.5 8.8" stroke="#000" stroke-width="1"/><path d="M6.3 4.2Q7 3.3 8 3.6" stroke="#fff" stroke-width="0.6" fill="none"/></svg>
<svg class="a" style="left:1238px;top:354px" width="15" height="11" viewBox="0 0 15 11"><path d="M0.6 5.6C2.8 1.6 5.6 0.5 7.5 0.5S12.2 1.6 14.4 5.6C12.2 9.6 9.4 10.6 7.5 10.6S2.8 9.6 0.6 5.6Z" fill="#a8a8a8"/><path d="M3.3 6C4.7 4 6.1 3.3 7.5 3.3S10.3 4 11.7 6C10.3 7.8 8.9 8.4 7.5 8.4S4.7 7.8 3.3 6Z" fill="#fff"/><path d="M4.9 5A2.6 2.6 0 0 0 10.1 5C10.1 3.6 9 3 7.5 3S4.9 3.6 4.9 5Z" fill="#a8a8a8"/><path d="M1.5 3.5L3 2.8M13.5 3.5L12 2.8M3 9.5L4.5 8.8" stroke="#a8a8a8" stroke-width="1"/><path d="M6.3 4.2Q7 3.3 8 3.6" stroke="#fff" stroke-width="0.6" fill="none"/></svg>
<svg class="a" style="left:1298px;top:352px" width="14" height="14" viewBox="0 0 14 14"><path d="M5 0.5H9V5H13.5V9H9V13.5H5V9H0.5V5H5Z" fill="#e00000" stroke="#900" stroke-width="0.3"/></svg>
<svg class="a" style="left:1358px;top:356px" width="14" height="6" viewBox="0 0 14 6"><rect x="0.5" y="1" width="13" height="4" fill="#e00000"/></svg>
<svg class="a" style="left:1418px;top:351px" width="14" height="14" viewBox="0 0 14 14"><path d="M1 13L2 9.6L10.6 1L13 3.4L4.4 12Z" fill="#e0b050" stroke="#8a6a30" stroke-width="0.6"/><path d="M10.6 1L13 3.4L11.9 4.5L9.5 2.1Z" fill="#e05060"/><path d="M1 13L2 9.6L4.4 12Z" fill="#e8d8b0"/><path d="M1 13L1.5 11.3L2.7 12.5Z" fill="#333"/></svg>
<div class="a" style="left:1155px;top:372px;width:300px;height:426px;background:#fff;border-top:1px solid #c4c4c4"></div>
<div class="a" style="left:1156px;top:393px;width:298px;height:20px;background:#0b4ad6"></div>
<div class="a" style="left:1161px;top:378.5px;width:16px;height:9px;background:#000;border:1px solid #222"></div>
<div class="a" style="left:1183px;top:374.5px;font-size:13.1px;letter-spacing:0.15px;color:#111;line-height:16px;white-space:nowrap">0</div>
<svg class="a" style="left:1415px;top:378px" width="15" height="11" viewBox="0 0 15 11"><path d="M0.6 5.6C2.8 1.6 5.6 0.5 7.5 0.5S12.2 1.6 14.4 5.6C12.2 9.6 9.4 10.6 7.5 10.6S2.8 9.6 0.6 5.6Z" fill="#000"/><path d="M3.3 6C4.7 4 6.1 3.3 7.5 3.3S10.3 4 11.7 6C10.3 7.8 8.9 8.4 7.5 8.4S4.7 7.8 3.3 6Z" fill="#fff"/><path d="M4.9 5A2.6 2.6 0 0 0 10.1 5C10.1 3.6 9 3 7.5 3S4.9 3.6 4.9 5Z" fill="#000"/><path d="M1.5 3.5L3 2.8M13.5 3.5L12 2.8M3 9.5L4.5 8.8" stroke="#000" stroke-width="1"/><path d="M6.3 4.2Q7 3.3 8 3.6" stroke="#fff" stroke-width="0.6" fill="none"/></svg>
<svg class="a" style="left:1440px;top:376px" width="11" height="14" viewBox="0 0 11 14"><path d="M2.2 6.5V4.3A3.3 3.3 0 0 1 8.8 4.3V6.5" stroke="#bdbdbd" stroke-width="1.3" fill="none"/><rect x="0.5" y="6.2" width="10" height="7.4" rx="0.5" fill="#bdbdbd"/></svg>
<div class="a" style="left:1161px;top:398.5px;width:16px;height:9px;background:#e040f0;border:1px solid #555"></div>
<div class="a" style="left:1183px;top:394.5px;font-size:13.1px;letter-spacing:0.15px;color:#fff;line-height:16px;white-space:nowrap">Ansichtsfenster</div>
<svg class="a" style="left:1415px;top:398px" width="15" height="11" viewBox="0 0 15 11"><path d="M0.6 5.6C2.8 1.6 5.6 0.5 7.5 0.5S12.2 1.6 14.4 5.6C12.2 9.6 9.4 10.6 7.5 10.6S2.8 9.6 0.6 5.6Z" fill="#3a4a60"/><path d="M3.3 6C4.7 4 6.1 3.3 7.5 3.3S10.3 4 11.7 6C10.3 7.8 8.9 8.4 7.5 8.4S4.7 7.8 3.3 6Z" fill="#0b4ad6"/><path d="M4.9 5A2.6 2.6 0 0 0 10.1 5C10.1 3.6 9 3 7.5 3S4.9 3.6 4.9 5Z" fill="#3a4a60"/><path d="M1.5 3.5L3 2.8M13.5 3.5L12 2.8M3 9.5L4.5 8.8" stroke="#3a4a60" stroke-width="1"/><path d="M6.3 4.2Q7 3.3 8 3.6" stroke="#0b4ad6" stroke-width="0.6" fill="none"/></svg>
<svg class="a" style="left:1440px;top:396px" width="11" height="14" viewBox="0 0 11 14"><path d="M2.2 6.5V4.3A3.3 3.3 0 0 1 8.8 4.3V6.5" stroke="#b4bccc" stroke-width="1.3" fill="none"/><rect x="0.5" y="6.2" width="10" height="7.4" rx="0.5" fill="#b4bccc"/></svg>
<svg class="a" style="left:1395px;top:396px" width="14" height="14" viewBox="0 0 14 14"><path d="M1 13L2 9.6L10.6 1L13 3.4L4.4 12Z" fill="#e0b050" stroke="#8a6a30" stroke-width="0.6"/><path d="M10.6 1L13 3.4L11.9 4.5L9.5 2.1Z" fill="#e05060"/><path d="M1 13L2 9.6L4.4 12Z" fill="#e8d8b0"/><path d="M1 13L1.5 11.3L2.7 12.5Z" fill="#333"/></svg>
<div class="a" style="left:1161px;top:418.5px;width:16px;height:9px;background:#108080;border:1px solid #222"></div>
<div class="a" style="left:1183px;top:414.5px;font-size:13.1px;letter-spacing:0.15px;color:#111;line-height:16px;white-space:nowrap">Bemassungen</div>
<svg class="a" style="left:1415px;top:418px" width="15" height="11" viewBox="0 0 15 11"><path d="M0.6 5.6C2.8 1.6 5.6 0.5 7.5 0.5S12.2 1.6 14.4 5.6C12.2 9.6 9.4 10.6 7.5 10.6S2.8 9.6 0.6 5.6Z" fill="#000"/><path d="M3.3 6C4.7 4 6.1 3.3 7.5 3.3S10.3 4 11.7 6C10.3 7.8 8.9 8.4 7.5 8.4S4.7 7.8 3.3 6Z" fill="#fff"/><path d="M4.9 5A2.6 2.6 0 0 0 10.1 5C10.1 3.6 9 3 7.5 3S4.9 3.6 4.9 5Z" fill="#000"/><path d="M1.5 3.5L3 2.8M13.5 3.5L12 2.8M3 9.5L4.5 8.8" stroke="#000" stroke-width="1"/><path d="M6.3 4.2Q7 3.3 8 3.6" stroke="#fff" stroke-width="0.6" fill="none"/></svg>
<svg class="a" style="left:1440px;top:416px" width="11" height="14" viewBox="0 0 11 14"><path d="M2.2 6.5V4.3A3.3 3.3 0 0 1 8.8 4.3V6.5" stroke="#bdbdbd" stroke-width="1.3" fill="none"/><rect x="0.5" y="6.2" width="10" height="7.4" rx="0.5" fill="#bdbdbd"/></svg>
<div class="a" style="left:1161px;top:438.5px;width:16px;height:9px;background:#fff;border:1px solid #222"></div>
<div class="a" style="left:1183px;top:434.5px;font-size:13.1px;letter-spacing:0.15px;color:#111;line-height:16px;white-space:nowrap">Defpoints</div>
<svg class="a" style="left:1415px;top:438px" width="15" height="11" viewBox="0 0 15 11"><path d="M0.6 5.6C2.8 1.6 5.6 0.5 7.5 0.5S12.2 1.6 14.4 5.6C12.2 9.6 9.4 10.6 7.5 10.6S2.8 9.6 0.6 5.6Z" fill="#000"/><path d="M3.3 6C4.7 4 6.1 3.3 7.5 3.3S10.3 4 11.7 6C10.3 7.8 8.9 8.4 7.5 8.4S4.7 7.8 3.3 6Z" fill="#fff"/><path d="M4.9 5A2.6 2.6 0 0 0 10.1 5C10.1 3.6 9 3 7.5 3S4.9 3.6 4.9 5Z" fill="#000"/><path d="M1.5 3.5L3 2.8M13.5 3.5L12 2.8M3 9.5L4.5 8.8" stroke="#000" stroke-width="1"/><path d="M6.3 4.2Q7 3.3 8 3.6" stroke="#fff" stroke-width="0.6" fill="none"/></svg>
<svg class="a" style="left:1440px;top:436px" width="11" height="14" viewBox="0 0 11 14"><path d="M2.2 6.5V4.3A3.3 3.3 0 0 1 8.8 4.3V6.5" stroke="#bdbdbd" stroke-width="1.3" fill="none"/><rect x="0.5" y="6.2" width="10" height="7.4" rx="0.5" fill="#bdbdbd"/></svg>
<div class="a" style="left:1161px;top:458.5px;width:16px;height:9px;background:#000;border:1px solid #222"></div>
<div class="a" style="left:1183px;top:454.5px;font-size:13.1px;letter-spacing:0.15px;color:#111;line-height:16px;white-space:nowrap">Rahmen</div>
<svg class="a" style="left:1415px;top:458px" width="15" height="11" viewBox="0 0 15 11"><path d="M0.6 5.6C2.8 1.6 5.6 0.5 7.5 0.5S12.2 1.6 14.4 5.6C12.2 9.6 9.4 10.6 7.5 10.6S2.8 9.6 0.6 5.6Z" fill="#000"/><path d="M3.3 6C4.7 4 6.1 3.3 7.5 3.3S10.3 4 11.7 6C10.3 7.8 8.9 8.4 7.5 8.4S4.7 7.8 3.3 6Z" fill="#fff"/><path d="M4.9 5A2.6 2.6 0 0 0 10.1 5C10.1 3.6 9 3 7.5 3S4.9 3.6 4.9 5Z" fill="#000"/><path d="M1.5 3.5L3 2.8M13.5 3.5L12 2.8M3 9.5L4.5 8.8" stroke="#000" stroke-width="1"/><path d="M6.3 4.2Q7 3.3 8 3.6" stroke="#fff" stroke-width="0.6" fill="none"/></svg>
<svg class="a" style="left:1440px;top:456px" width="11" height="14" viewBox="0 0 11 14"><path d="M2.2 6.5V4.3A3.3 3.3 0 0 1 8.8 4.3V6.5" stroke="#bdbdbd" stroke-width="1.3" fill="none"/><rect x="0.5" y="6.2" width="10" height="7.4" rx="0.5" fill="#bdbdbd"/></svg>
<div class="a" style="left:1161px;top:478.5px;width:16px;height:9px;background:#000;border:1px solid #222"></div>
<div class="a" style="left:1183px;top:474.5px;font-size:13.1px;letter-spacing:0.15px;color:#111;line-height:16px;white-space:nowrap">Sichtbar</div>
<svg class="a" style="left:1415px;top:478px" width="15" height="11" viewBox="0 0 15 11"><path d="M0.6 5.6C2.8 1.6 5.6 0.5 7.5 0.5S12.2 1.6 14.4 5.6C12.2 9.6 9.4 10.6 7.5 10.6S2.8 9.6 0.6 5.6Z" fill="#000"/><path d="M3.3 6C4.7 4 6.1 3.3 7.5 3.3S10.3 4 11.7 6C10.3 7.8 8.9 8.4 7.5 8.4S4.7 7.8 3.3 6Z" fill="#fff"/><path d="M4.9 5A2.6 2.6 0 0 0 10.1 5C10.1 3.6 9 3 7.5 3S4.9 3.6 4.9 5Z" fill="#000"/><path d="M1.5 3.5L3 2.8M13.5 3.5L12 2.8M3 9.5L4.5 8.8" stroke="#000" stroke-width="1"/><path d="M6.3 4.2Q7 3.3 8 3.6" stroke="#fff" stroke-width="0.6" fill="none"/></svg>
<svg class="a" style="left:1440px;top:476px" width="11" height="14" viewBox="0 0 11 14"><path d="M2.2 6.5V4.3A3.3 3.3 0 0 1 8.8 4.3V6.5" stroke="#bdbdbd" stroke-width="1.3" fill="none"/><rect x="0.5" y="6.2" width="10" height="7.4" rx="0.5" fill="#bdbdbd"/></svg>
<div class="a" style="left:1161px;top:498.5px;width:16px;height:9px;background:#ff0000;border:1px solid #222"></div>
<div class="a" style="left:1183px;top:494.5px;font-size:13.1px;letter-spacing:0.15px;color:#111;line-height:16px;white-space:nowrap">Zentrum</div>
<svg class="a" style="left:1415px;top:498px" width="15" height="11" viewBox="0 0 15 11"><path d="M0.6 5.6C2.8 1.6 5.6 0.5 7.5 0.5S12.2 1.6 14.4 5.6C12.2 9.6 9.4 10.6 7.5 10.6S2.8 9.6 0.6 5.6Z" fill="#000"/><path d="M3.3 6C4.7 4 6.1 3.3 7.5 3.3S10.3 4 11.7 6C10.3 7.8 8.9 8.4 7.5 8.4S4.7 7.8 3.3 6Z" fill="#fff"/><path d="M4.9 5A2.6 2.6 0 0 0 10.1 5C10.1 3.6 9 3 7.5 3S4.9 3.6 4.9 5Z" fill="#000"/><path d="M1.5 3.5L3 2.8M13.5 3.5L12 2.8M3 9.5L4.5 8.8" stroke="#000" stroke-width="1"/><path d="M6.3 4.2Q7 3.3 8 3.6" stroke="#fff" stroke-width="0.6" fill="none"/></svg>
<svg class="a" style="left:1440px;top:496px" width="11" height="14" viewBox="0 0 11 14"><path d="M2.2 6.5V4.3A3.3 3.3 0 0 1 8.8 4.3V6.5" stroke="#bdbdbd" stroke-width="1.3" fill="none"/><rect x="0.5" y="6.2" width="10" height="7.4" rx="0.5" fill="#bdbdbd"/></svg>
<div class="a" style="left:1153px;top:108px;width:2px;height:690px;background:#ececec"></div><div class="a" style="left:1155px;top:108px;width:1px;height:690px;background:#d0d0d0"></div><!--dockline-->
<div class="a" style="left:1463px;top:116px;width:2px;height:2px;background:#a8a8a8"></div><div class="a" style="left:1469px;top:116px;width:2px;height:2px;background:#a8a8a8"></div><div class="a" style="left:1475px;top:116px;width:2px;height:2px;background:#a8a8a8"></div><div class="a" style="left:1481px;top:116px;width:2px;height:2px;background:#a8a8a8"></div><div class="a" style="left:1487px;top:116px;width:2px;height:2px;background:#a8a8a8"></div>
<div class="a" style="left:1456px;top:120px;width:42px;height:43px;background:#bdbdbd;border-radius:6px"></div>
<div class="a" style="left:1456px;top:167px;width:42px;height:43px;background:#bdbdbd;border-radius:6px"></div>
<svg class="a" style="left:1463px;top:127px" width="28" height="28" viewBox="0 0 28 28"><rect x="0.7" y="0.7" width="26.6" height="26.6" fill="#fff" stroke="#333" stroke-width="0.9"/><rect x="0.7" y="0.7" width="26.6" height="4.6" fill="#000"/><rect x="1.6" y="1.5" width="3" height="3" fill="#fff"/><path d="M7 13L16 10L17 21L8 24Z" fill="#6a6a6a" stroke="#333" stroke-width="0.5"/><path d="M9 12L18 9L19 20L10 23Z" fill="#9a9a9a" stroke="#333" stroke-width="0.5"/><path d="M11 11L20 8L21 19L12 22Z" fill="#f6f6f6" stroke="#444" stroke-width="0.6"/><path d="M14 19L17 11.5L18.5 18M15 16.5L18 15.5" stroke="#e04040" stroke-width="0.6" fill="none"/></svg>
<svg class="a" style="left:1463px;top:175px" width="28" height="28" viewBox="0 0 28 28"><rect x="0.7" y="0.7" width="26.6" height="26.6" fill="#fff" stroke="#333" stroke-width="0.9"/><rect x="0.7" y="0.7" width="26.6" height="4.6" fill="#000"/><rect x="1.6" y="1.5" width="3" height="3" fill="#fff"/><rect x="5" y="9" width="11" height="9" fill="#f4e4b0" stroke="#555" stroke-width="0.7"/><circle cx="17" cy="18" r="5.5" fill="#f4e4b0" stroke="#555" stroke-width="0.7" fill-opacity="0.85"/></svg>
<svg class="a" style="left:1463px;top:222px" width="28" height="28" viewBox="0 0 28 28"><rect x="0.7" y="0.7" width="26.6" height="26.6" fill="#fff" stroke="#333" stroke-width="0.9"/><rect x="0.7" y="0.7" width="26.6" height="4.6" fill="#000"/><rect x="1.6" y="1.5" width="3" height="3" fill="#fff"/><rect x="5" y="10" width="18" height="12" rx="2.5" fill="#f2f2f2" stroke="#c4d4ec" stroke-width="0.9"/></svg>
<div class="a" style="left:1457px;top:262px;width:1px;height:1px;background:#666"></div><div class="a" style="left:1461px;top:262px;width:1px;height:1px;background:#666"></div><div class="a" style="left:1465px;top:262px;width:1px;height:1px;background:#666"></div><div class="a" style="left:1469px;top:262px;width:1px;height:1px;background:#666"></div><div class="a" style="left:1473px;top:262px;width:1px;height:1px;background:#666"></div><div class="a" style="left:1477px;top:262px;width:1px;height:1px;background:#666"></div><div class="a" style="left:1481px;top:262px;width:1px;height:1px;background:#666"></div><div class="a" style="left:1485px;top:262px;width:1px;height:1px;background:#666"></div><div class="a" style="left:1489px;top:262px;width:1px;height:1px;background:#666"></div><div class="a" style="left:1493px;top:262px;width:1px;height:1px;background:#666"></div><div class="a" style="left:1497px;top:262px;width:1px;height:1px;background:#666"></div>
<svg class="a" style="left:1463px;top:277px" width="28" height="28" viewBox="0 0 28 28"><rect x="0.7" y="0.7" width="26.6" height="26.6" fill="#fff" stroke="#333" stroke-width="0.9"/><rect x="0.7" y="0.7" width="26.6" height="4.6" fill="#000"/><rect x="1.6" y="1.5" width="3" height="3" fill="#fff"/><rect x="3.5" y="8" width="3.5" height="3" fill="#111"/><rect x="3.5" y="13.5" width="3.5" height="3" fill="#111"/><rect x="3.5" y="19" width="3.5" height="3" fill="#111"/><rect x="9" y="8" width="15" height="3" fill="none" stroke="#333" stroke-width="0.6"/><rect x="9" y="13.5" width="15" height="3" fill="none" stroke="#333" stroke-width="0.6"/><rect x="9" y="19" width="15" height="3" fill="none" stroke="#333" stroke-width="0.6"/></svg>
<svg class="a" style="left:1463px;top:324px" width="28" height="28" viewBox="0 0 28 28"><rect x="0.7" y="0.7" width="26.6" height="26.6" fill="#fff" stroke="#333" stroke-width="0.9"/><rect x="0.7" y="0.7" width="26.6" height="4.6" fill="#000"/><rect x="1.6" y="1.5" width="3" height="3" fill="#fff"/><path d="M5 9H23L16 16V23L12 21V16Z" fill="#c8c8c8" stroke="#777" stroke-width="0.7"/><ellipse cx="14" cy="9.5" rx="9" ry="1.8" fill="#e8e8e8" stroke="#888" stroke-width="0.5"/></svg>
<svg class="a" style="left:1463px;top:370px" width="28" height="28" viewBox="0 0 28 28"><rect x="0.7" y="0.7" width="26.6" height="26.6" fill="#fff" stroke="#333" stroke-width="0.9"/><rect x="0.7" y="0.7" width="26.6" height="4.6" fill="#000"/><rect x="1.6" y="1.5" width="3" height="3" fill="#fff"/><path d="M6 9L12 12V21L6 24Z" fill="#fff" stroke="#333" stroke-width="0.8"/><rect x="12" y="12.5" width="11" height="8.5" rx="1.5" fill="#aaa" stroke="#555" stroke-width="0.6"/><path d="M4 16.5H26" stroke="#f06060" stroke-width="0.6" stroke-dasharray="1.5 1"/></svg>
<div class="a" style="left:1457px;top:411px;width:1px;height:1px;background:#666"></div><div class="a" style="left:1461px;top:411px;width:1px;height:1px;background:#666"></div><div class="a" style="left:1465px;top:411px;width:1px;height:1px;background:#666"></div><div class="a" style="left:1469px;top:411px;width:1px;height:1px;background:#666"></div><div class="a" style="left:1473px;top:411px;width:1px;height:1px;background:#666"></div><div class="a" style="left:1477px;top:411px;width:1px;height:1px;background:#666"></div><div class="a" style="left:1481px;top:411px;width:1px;height:1px;background:#666"></div><div class="a" style="left:1485px;top:411px;width:1px;height:1px;background:#666"></div><div class="a" style="left:1489px;top:411px;width:1px;height:1px;background:#666"></div><div class="a" style="left:1493px;top:411px;width:1px;height:1px;background:#666"></div><div class="a" style="left:1497px;top:411px;width:1px;height:1px;background:#666"></div>
<div class="a" style="left:1456px;top:418px;width:42px;height:41px;background:#bdbdbd;border-radius:6px"></div>
<svg class="a" style="left:1463px;top:424px" width="28" height="28" viewBox="0 0 28 28"><rect x="0.7" y="0.7" width="26.6" height="26.6" fill="#fff" stroke="#333" stroke-width="0.9"/><rect x="0.7" y="0.7" width="26.6" height="4.6" fill="#000"/><rect x="1.6" y="1.5" width="3" height="3" fill="#fff"/><path d="M4 9H16M4 12H17M4 15H16M4 18H17" stroke="#777" stroke-width="0.7"/><path d="M1 23H27" stroke="#333" stroke-width="0.6"/><path d="M4 25.5H6M9 25.5H22" stroke="#444" stroke-width="0.8"/></svg>
<svg class="a" style="left:1463px;top:470px" width="28" height="28" viewBox="0 0 28 28"><rect x="0.7" y="0.7" width="26.6" height="26.6" fill="#fff" stroke="#333" stroke-width="0.9"/><rect x="0.7" y="0.7" width="26.6" height="4.6" fill="#000"/><rect x="1.6" y="1.5" width="3" height="3" fill="#fff"/><rect x="7" y="9" width="14" height="16" rx="1" fill="#d49040" stroke="#8a5a20" stroke-width="0.7"/><rect x="9" y="11" width="10" height="12" fill="#f4f4f4"/><rect x="11" y="7.5" width="6" height="3" rx="1" fill="#999"/><path d="M10.5 14H17.5M10.5 16H17.5M10.5 18H16" stroke="#bbb" stroke-width="0.6"/></svg>
<div class="a" style="left:0;top:798px;width:1500px;height:46px;background:#dcdcdc"></div>
<div class="a" style="left:0;top:798px;width:1500px;height:1px;background:#e6e6e6"></div>
<div class="st" style="left:2px;top:806px;font-size:10px">360,190</div>
<div class="st" style="left:2px;top:825.5px;font-size:10px">@-440,-310</div>
<div class="a" style="left:253px;top:802px;width:1px;height:40px;background:#8a8a8a"></div>
<div class="st" style="left:256px;top:806px;font-size:10px;letter-spacing:0.2px">407.0626&lt;28°</div>
<div class="st" style="left:256px;top:825.5px;font-size:10px;letter-spacing:0.2px">@538.2379&lt;215°</div>
<div class="a" style="left:506px;top:819px;width:6px;height:6px;border-radius:3px;background:#c4c4c4"></div>
<div class="st" style="left:662px;top:815px;font-size:10px;letter-spacing:0.15px">Position</div>
<svg class="a" style="left:716px;top:805px" width="20" height="31" viewBox="0 0 20 31"><path d="M10 1C4.5 1 1.5 5 1.5 10V21C1.5 26.5 5 30 10 30S18.5 26.5 18.5 21V10C18.5 5 15.5 1 10 1Z" fill="#fff" stroke="#333" stroke-width="0.9"/><path d="M1.5 13H18.5M10 1V13" stroke="#333" stroke-width="0.8"/><rect x="8.5" y="3.5" width="3" height="6" rx="1.5" fill="#fff" stroke="#333" stroke-width="0.8"/></svg>
<div class="st" style="left:754px;top:815px;font-size:10px;letter-spacing:0.05px">Abbrechen</div>
<div class="a" style="left:941px;top:819px;width:6px;height:6px;border-radius:3px;background:#c4c4c4"></div>
<div class="st" style="left:949px;top:815px;font-size:10px;letter-spacing:0.1px">Keine Objekte selektiert.</div>
<div class="a" style="left:1269px;top:819px;width:6px;height:6px;border-radius:3px;background:#c4c4c4"></div>

<svg class="a" style="left:1140px;top:44px" width="90" height="90" viewBox="1140 44 90 90">
<defs><radialGradient id="hl" cx="1184.5" cy="88.5" r="38" gradientUnits="userSpaceOnUse"><stop offset="0" stop-color="#fff" stop-opacity="0.12"/><stop offset="0.78" stop-color="#c8d8ea" stop-opacity="0.1"/><stop offset="0.84" stop-color="#90b0d4" stop-opacity="0.45"/><stop offset="0.92" stop-color="#98b6d8" stop-opacity="0.5"/><stop offset="0.97" stop-color="#a8c2e0" stop-opacity="0.25"/><stop offset="1" stop-color="#b0c8e4" stop-opacity="0"/></radialGradient></defs>
<circle cx="1184.5" cy="88.5" r="38" fill="url(#hl)"/>
<circle cx="1184.5" cy="88.5" r="33.5" fill="none" stroke="#9ab4d4" stroke-width="0.8" opacity="0.5"/>
<circle cx="1184.5" cy="88.5" r="35.8" fill="none" stroke="#9ab4d4" stroke-width="0.8" opacity="0.5"/>
</svg>
<svg class="a" style="left:1183px;top:87px" width="20" height="29" viewBox="0 0 20 29"><path d="M1.5 1.5V23L6.5 18.2L10.3 27L14 25.4L10.4 16.8H17.2Z" fill="#fff" stroke="#000" stroke-width="1.2" stroke-linejoin="round"/></svg>

</body></html>
